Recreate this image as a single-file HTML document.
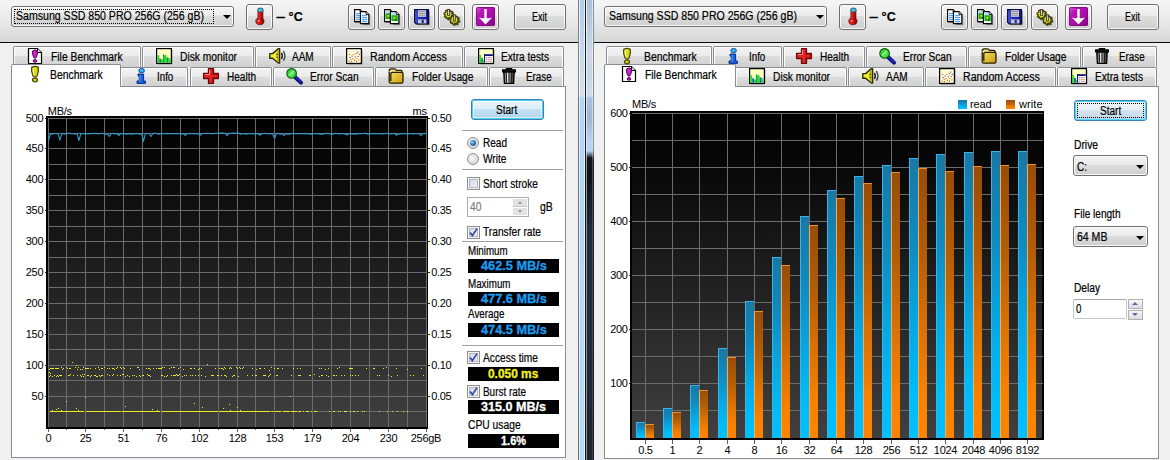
<!DOCTYPE html>
<html lang="en"><head><meta charset="utf-8"><title>HD Tune Pro</title>
<style>
*{box-sizing:border-box;margin:0;padding:0}
html,body{width:1170px;height:460px;overflow:hidden;background:#f0f0f0}
body{position:relative;font-family:"Liberation Sans",sans-serif;font-size:11px;color:#000;letter-spacing:-0.3px;-webkit-text-stroke:0.2px #000}
.abs,.t,.win,.btn,.tab,.combo,.blk,.sep,.chk,.rad,.lbl{position:absolute}
.win{top:0;height:460px;width:578px;background:#f0f0f0;overflow:hidden}
.tb{position:absolute;left:0;top:0;width:100%;height:42px;background:linear-gradient(#f5f5f5 0%,#e9e9e9 50%,#d6d6d6 100%)}
.tbl{position:absolute;left:0;top:42px;width:100%;height:1px;background:#0a0a0a}
.tbl2{position:absolute;left:0;top:42px;width:100%;height:1px;background:#8a8a8a}
.btn{border:1px solid #707070;border-radius:3px;background:linear-gradient(#f4f4f4 0%,#ebebeb 44%,#dddddd 47%,#cfcfcf 100%);box-shadow:inset 0 0 0 1px rgba(255,255,255,.85)}
.btn.def{border-color:#3c7fb1;background:linear-gradient(#eef6fb 0%,#dcedf8 48%,#c4e0f3 50%,#b0d4ec 100%);box-shadow:inset 0 0 0 1px #49d4f4, inset 0 0 0 2px rgba(255,255,255,.55)}
.btn.foc{border-color:#3c7fb1;background:linear-gradient(#f2f7fa 0%,#e6eff6 48%,#d4e3ef 50%,#c6d9e8 100%);box-shadow:inset 0 0 0 1px #48d8fb}
.t{white-space:pre;line-height:13px;height:13px}
.combo{border:1px solid #707070;border-radius:3px;background:linear-gradient(#f4f4f4 0%,#ebebeb 44%,#dddddd 47%,#cfcfcf 100%);box-shadow:inset 0 0 0 1px rgba(255,255,255,.85)}
.arr{position:absolute;width:0;height:0;border-left:4px solid transparent;border-right:4px solid transparent;border-top:4px solid #000}
.tab{border:1px solid #898c95;border-bottom:none;border-radius:2px 2px 0 0;background:linear-gradient(#f3f3f3 0%,#ebebeb 44%,#dddddd 47%,#d0d0d0 100%);box-shadow:inset 1px 1px 0 rgba(255,255,255,.9), inset -1px 0 0 rgba(255,255,255,.9)}
.tab.sel{background:#fff;box-shadow:none;z-index:3}
.panel{position:absolute;border:1px solid #898c95;background:#fff;z-index:2}
.blk{background:#000;height:14px;left:468px;width:91px;text-align:center;font-weight:bold;font-size:12px;line-height:14px;letter-spacing:0}
.sep{height:1px;background:#a0a0a0;left:462px;width:101px}
.chk{width:13px;height:13px;border:1px solid #8e8f8f;background:linear-gradient(135deg,#cdd3e4,#f6f7fb);box-shadow:inset 0 0 0 1px #f4f4f4, inset 0 0 0 2px #b4b8c4}
.rad{width:12px;height:12px;border:1px solid #8e8f8f;border-radius:50%;background:radial-gradient(circle at 40% 40%,#f6f6f6,#d0d0d0)}
svg{position:absolute;overflow:visible}
</style></head>
<body>
<div class="win" style="left:0">
<div class="tb"></div><div class="tbl"></div><div class="combo" style="left:11px;top:6px;width:223px;height:21px"></div><div class="abs" style="left:14px;top:9px;width:200px;height:15px;border:1px dotted #000"></div><div class="t" style="left:15.5px;top:10px;font-size:12px;letter-spacing:0;transform:scaleX(0.8808);transform-origin:0 0;">Samsung SSD 850 PRO 256G (256 gB)</div><div class="arr" style="left:223px;top:15px"></div><div class="btn" style="left:246px;top:4px;width:27px;height:26px"></div><svg style="left:254.6px;top:8px" width="10" height="17" viewBox="0 0 10 17"><defs><linearGradient id="rg" x1="0" y1="0" x2="1" y2="0"><stop offset="0" stop-color="#e83030"/><stop offset=".45" stop-color="#dc1616"/><stop offset="1" stop-color="#7c0606"/></linearGradient></defs><ellipse cx="4.9" cy="13.2" rx="4.1" ry="3.5" fill="url(#rg)" stroke="#5e0505" stroke-width=".7"/><path d="M2.9 1.4 Q2.9 0.3 4 0.3 H6.8 Q7.9 0.3 7.9 1.4 V11 H2.9Z" fill="url(#rg)" stroke="#5e0505" stroke-width=".7"/><path d="M2.9 1.4 Q2.9 0.3 4 0.3 H6.8 Q7.9 0.3 7.9 1.4 V3.8 H2.9Z" fill="#46c4d6" stroke="#1a6a78" stroke-width=".7"/><path d="M3.3 9.4 H7.5 V11.4 H3.3Z" fill="url(#rg)"/><path d="M3.4 12 L4.6 12.2 L4.4 13.4 L3.2 13.2Z" fill="#fff"/></svg><div class="t" style="left:276px;top:11.4px;font-weight:bold;letter-spacing:0;font-size:12px;transform:scaleX(1.4);transform-origin:0 0">–</div><div class="t" style="left:288.6px;top:11.2px;font-weight:bold;letter-spacing:0.2px;font-size:12.5px">°C</div><div class="btn" style="left:348px;top:4px;width:27px;height:26px"></div><div class="btn" style="left:378px;top:4px;width:27px;height:26px"></div><div class="btn" style="left:408px;top:4px;width:27px;height:26px"></div><div class="btn" style="left:438px;top:4px;width:27px;height:26px"></div><svg style="left:354px;top:9px" width="16" height="16" viewBox="0 0 16 16"><path d="M1.6 13.4 H9.6 V15.6 H15.6 V5" stroke="#333" stroke-width="1" fill="none" opacity=".55"/><path d="M0.6 0.6 H6.199999999999999 L9.0 3.4 V12.6 H0.6Z" fill="#fff" stroke="#000" stroke-width="1.1"/><path d="M6.199999999999999 0.6 V3.4 H9.0" fill="#e8e8e8" stroke="#000" stroke-width=".9"/><rect x="2.0" y="4.2" width="5.4" height="1" fill="#2a8ee8"/><rect x="2.0" y="6.2" width="5.4" height="1" fill="#2a8ee8"/><rect x="2.0" y="8.2" width="5.4" height="1" fill="#2a8ee8"/><rect x="2.0" y="10.2" width="5.4" height="1" fill="#2a8ee8"/><path d="M6.4 2.6 H12.0 L14.8 5.4 V14.6 H6.4Z" fill="#fff" stroke="#000" stroke-width="1.1"/><path d="M12.0 2.6 V5.4 H14.8" fill="#e8e8e8" stroke="#000" stroke-width=".9"/><rect x="7.800000000000001" y="6.2" width="5.4" height="1" fill="#2a8ee8"/><rect x="7.800000000000001" y="8.2" width="5.4" height="1" fill="#2a8ee8"/><rect x="7.800000000000001" y="10.2" width="5.4" height="1" fill="#2a8ee8"/><rect x="7.800000000000001" y="12.2" width="5.4" height="1" fill="#2a8ee8"/></svg><svg style="left:384px;top:9px" width="16" height="16" viewBox="0 0 16 16"><path d="M1.6 13.4 H9.6 V15.6 H15.6 V5" stroke="#333" stroke-width="1" fill="none" opacity=".55"/><path d="M0.6 0.6 H6.199999999999999 L9.0 3.4 V12.6 H0.6Z" fill="#fff" stroke="#000" stroke-width="1.1"/><path d="M6.199999999999999 0.6 V3.4 H9.0" fill="#e8e8e8" stroke="#000" stroke-width=".9"/><rect x="1.6" y="2.0" width="4.4" height="2.2" fill="#a8e0ff"/><rect x="1.6" y="4.2" width="6.4" height="6" fill="#22b022"/><rect x="3.6" y="6.0" width="1.8" height="1.8" fill="#c8e820"/><rect x="5.199999999999999" y="8.0" width="1.4" height="1.4" fill="#084008"/><path d="M6.4 2.6 H12.0 L14.8 5.4 V14.6 H6.4Z" fill="#fff" stroke="#000" stroke-width="1.1"/><path d="M12.0 2.6 V5.4 H14.8" fill="#e8e8e8" stroke="#000" stroke-width=".9"/><rect x="7.4" y="4.0" width="4.4" height="2.2" fill="#a8e0ff"/><rect x="7.4" y="6.2" width="6.4" height="6" fill="#22b022"/><rect x="9.4" y="8.0" width="1.8" height="1.8" fill="#c8e820"/><rect x="11.0" y="10.0" width="1.4" height="1.4" fill="#084008"/></svg><svg style="left:414px;top:8.6px" width="16" height="16" viewBox="0 0 16 16"><defs><linearGradient id="bg1" x1="0" y1="0" x2="1" y2="0"><stop offset="0" stop-color="#5a68d8"/><stop offset=".3" stop-color="#2030c8"/><stop offset="1" stop-color="#0c1890"/></linearGradient></defs><path d="M0.6 0.6 H14.4 V14.8 H2.2 L0.6 13.2Z" fill="url(#bg1)" stroke="#060a3c" stroke-width="1.2"/><path d="M15.2 1.6 V15.6 H3" stroke="#222" stroke-width="1" fill="none" opacity=".6"/><rect x="4" y="1.2" width="8" height="6.6" fill="#d8d8d8"/><path d="M4.4 2.6 H11.6 M4.4 4.4 H11.6 M4.4 6.2 H11.6" stroke="#8a8a8a" stroke-width=".9"/><rect x="4" y="10.4" width="8.4" height="4" fill="#c8c8c8"/><rect x="7.6" y="10.8" width="2.2" height="3.2" fill="#1a2aa8"/></svg><svg style="left:442.6px;top:7.6px" width="18" height="18" viewBox="0 0 18 18"><path d="M10.09 6.62 L9.85 7.79 L8.55 7.82 L8.05 8.55 L8.52 9.77 L7.52 10.43 L6.58 9.53 L5.71 9.70 L5.18 10.89 L4.01 10.65 L3.98 9.35 L3.25 8.85 L2.03 9.32 L1.37 8.32 L2.27 7.38 L2.10 6.51 L0.91 5.98 L1.15 4.81 L2.45 4.78 L2.95 4.05 L2.48 2.83 L3.48 2.17 L4.42 3.07 L5.29 2.90 L5.82 1.71 L6.99 1.95 L7.02 3.25 L7.75 3.75 L8.97 3.28 L9.63 4.28 L8.73 5.22 L8.90 6.09Z" transform="translate(.9 .9)" fill="#2a2a04" stroke="#2a2a04" stroke-width="1.2" stroke-linejoin="round" opacity=".75"/><path d="M10.09 6.62 L9.85 7.79 L8.55 7.82 L8.05 8.55 L8.52 9.77 L7.52 10.43 L6.58 9.53 L5.71 9.70 L5.18 10.89 L4.01 10.65 L3.98 9.35 L3.25 8.85 L2.03 9.32 L1.37 8.32 L2.27 7.38 L2.10 6.51 L0.91 5.98 L1.15 4.81 L2.45 4.78 L2.95 4.05 L2.48 2.83 L3.48 2.17 L4.42 3.07 L5.29 2.90 L5.82 1.71 L6.99 1.95 L7.02 3.25 L7.75 3.75 L8.97 3.28 L9.63 4.28 L8.73 5.22 L8.90 6.09Z" fill="#e4e41e" stroke="#3a3a04" stroke-width="1.1" stroke-linejoin="round"/><circle cx="5.5" cy="6.3" r="1.66" fill="#8a8a10"/><rect x="4.6" y="1.3999999999999995" width="1.9" height="6.2" fill="#d8d8d8" stroke="#333" stroke-width=".8"/><path d="M15.99 12.13 L15.75 13.32 L14.41 13.35 L13.91 14.10 L14.38 15.35 L13.37 16.02 L12.40 15.10 L11.52 15.27 L10.97 16.49 L9.78 16.25 L9.75 14.91 L9.00 14.41 L7.75 14.88 L7.08 13.87 L8.00 12.90 L7.83 12.02 L6.61 11.47 L6.85 10.28 L8.19 10.25 L8.69 9.50 L8.22 8.25 L9.23 7.58 L10.20 8.50 L11.08 8.33 L11.63 7.11 L12.82 7.35 L12.85 8.69 L13.60 9.19 L14.85 8.72 L15.52 9.73 L14.60 10.70 L14.77 11.58Z" transform="translate(.9 .9)" fill="#2a2a04" stroke="#2a2a04" stroke-width="1.2" stroke-linejoin="round" opacity=".75"/><path d="M15.99 12.13 L15.75 13.32 L14.41 13.35 L13.91 14.10 L14.38 15.35 L13.37 16.02 L12.40 15.10 L11.52 15.27 L10.97 16.49 L9.78 16.25 L9.75 14.91 L9.00 14.41 L7.75 14.88 L7.08 13.87 L8.00 12.90 L7.83 12.02 L6.61 11.47 L6.85 10.28 L8.19 10.25 L8.69 9.50 L8.22 8.25 L9.23 7.58 L10.20 8.50 L11.08 8.33 L11.63 7.11 L12.82 7.35 L12.85 8.69 L13.60 9.19 L14.85 8.72 L15.52 9.73 L14.60 10.70 L14.77 11.58Z" fill="#e4e41e" stroke="#3a3a04" stroke-width="1.1" stroke-linejoin="round"/><circle cx="11.3" cy="11.8" r="1.69" fill="#8a8a10"/><rect x="10.4" y="6.9" width="1.9" height="6.2" fill="#d8d8d8" stroke="#333" stroke-width=".8"/></svg><div class="btn" style="left:472px;top:4px;width:27px;height:26px"></div><svg style="left:476px;top:7.4px" width="19" height="19" viewBox="0 0 19 19"><defs><linearGradient id="pg" x1="0" y1="0" x2="1" y2="1"><stop offset="0" stop-color="#d860d8"/><stop offset=".25" stop-color="#b818b8"/><stop offset=".6" stop-color="#a80ca8"/><stop offset="1" stop-color="#820682"/></linearGradient></defs><rect x="0" y="0" width="19" height="19" rx="1.8" fill="url(#pg)"/><rect x="0.5" y="0.5" width="18" height="18" rx="1.6" fill="none" stroke="#7a0a7a" stroke-width="1" opacity=".8"/><path d="M9.5 2 V12.5" stroke="#fff" stroke-width="2.4"/><path d="M2.9 10.6 L6.2 11.3 H12.8 L16.1 10.6 L9.5 17.6Z" fill="#fff"/></svg><div class="btn" style="left:514px;top:4px;width:52px;height:26px"></div><div class="t" style="left:532px;top:11px;font-size:12px;letter-spacing:0;transform:scaleX(0.7498);transform-origin:0 0;">Exit</div><div class="tab" style="left:13px;top:46px;width:128px;height:21px"></div><svg style="z-index:4;left:27.2px;top:48px" width="16" height="16" viewBox="0 0 16 16"><path d="M1.5 0.5 H10.5 L14.5 4.5 V15.5 H1.5Z" fill="#fff" stroke="#000" stroke-width="1.2"/><path d="M10.5 0.5 V4.5 H14.5" fill="#ddd" stroke="#000" stroke-width="1"/><path d="M5.6 3 Q8 0.8 10.4 3 Q11 5.6 9.4 9.2 Q8.9 10.2 8 10.2 Q7.1 10.2 6.6 9.2 Q5 5.6 5.6 3Z" fill="#d420d4" stroke="#4a004a" stroke-width="1"/><ellipse cx="8" cy="12.9" rx="1.8" ry="1.3" fill="#d420d4" stroke="#4a004a" stroke-width="1"/></svg><div class="t" style="left:51.2px;top:51px;font-size:12px;letter-spacing:0;transform:scaleX(0.8602);transform-origin:0 0;z-index:4;">File Benchmark</div><div class="tab" style="left:142px;top:46px;width:112px;height:21px"></div><svg style="z-index:4;left:156px;top:48px" width="16" height="16" viewBox="0 0 16 16"><rect x="0.6" y="0.6" width="14.8" height="14.8" fill="#ffffc0" stroke="#000" stroke-width="1.2"/><path d="M15.7 1.6 V15.7 H1.6" stroke="#000" stroke-width="1" fill="none" opacity=".8"/><rect x="1.2" y="7.2" width="2.0" height="7.6" fill="#22e022"/><rect x="3.2" y="10.4" width="1.8" height="4.4" fill="#1f8a5e"/><rect x="5.0" y="11.4" width="2.0" height="3.4" fill="#22e022"/><rect x="7.0" y="6.2" width="0.9" height="8.6" fill="#178052"/><rect x="7.9" y="7.2" width="2.7" height="7.6" fill="#22e022"/><rect x="10.6" y="9.4" width="2.0" height="5.4" fill="#1f8a5e"/><rect x="12.6" y="10.4" width="2.2" height="4.4" fill="#22e022"/></svg><div class="t" style="left:179.7px;top:51px;font-size:12px;letter-spacing:0;transform:scaleX(0.8549);transform-origin:0 0;z-index:4;">Disk monitor</div><div class="tab" style="left:255px;top:46px;width:76px;height:21px"></div><svg style="z-index:4;left:268.8px;top:48px" width="17" height="16" viewBox="0 0 17 16"><path d="M0.8 5.6 H3.6 L9.4 0.6 H10.6 V15 H9.4 L3.6 10.2 H0.8Z" fill="#f2ee2a" stroke="#2e2a04" stroke-width="1.4" stroke-linejoin="round"/><path d="M9 2 V13.6" stroke="#a8a010" stroke-width="1.4"/><circle cx="8" cy="6.4" r=".8" fill="#333"/><circle cx="8" cy="9.2" r=".8" fill="#333"/><path d="M12.4 4.8 Q14.2 7.8 12.4 10.8" stroke="#222" stroke-width="1.5" fill="none"/><path d="M14.4 3 Q17.4 7.8 14.4 12.6" stroke="#444" stroke-width="1.4" fill="none"/></svg><div class="t" style="left:292.3px;top:51px;font-size:12px;letter-spacing:0;transform:scaleX(0.8345);transform-origin:0 0;z-index:4;">AAM</div><div class="tab" style="left:332px;top:46px;width:131px;height:21px"></div><svg style="z-index:4;left:346.2px;top:48px" width="16" height="16" viewBox="0 0 16 16"><rect x="0.6" y="0.6" width="14.8" height="14.8" fill="#fffad2" stroke="#000" stroke-width="1.2"/><path d="M15.6 1.5 V15.6 H1.5" stroke="#000" stroke-width="1.2" fill="none"/><rect x="2.6" y="12.6" width="1" height="1" fill="#e02020"/><rect x="3.6" y="9" width="1" height="1" fill="#2020c0"/><rect x="4.6" y="11" width="1" height="1" fill="#e06010"/><rect x="5.6" y="7.6" width="1" height="1" fill="#2020c0"/><rect x="6.4" y="10.2" width="1" height="1" fill="#e02020"/><rect x="7.4" y="6" width="1" height="1" fill="#e06010"/><rect x="8" y="11.8" width="1" height="1" fill="#e02020"/><rect x="8.8" y="8.4" width="1" height="1" fill="#2020c0"/><rect x="9.8" y="5" width="1" height="1" fill="#e02020"/><rect x="10.4" y="10" width="1" height="1" fill="#e06010"/><rect x="11.2" y="3.6" width="1" height="1" fill="#2020c0"/><rect x="11.8" y="8" width="1" height="1" fill="#e02020"/><rect x="12.4" y="11.4" width="1" height="1" fill="#e06010"/><rect x="12.8" y="5.8" width="1" height="1" fill="#2020c0"/><rect x="5" y="13" width="1" height="1" fill="#e06010"/><rect x="10" y="12.6" width="1" height="1" fill="#e02020"/><rect x="3" y="6" width="1" height="1" fill="#e06010"/></svg><div class="t" style="left:369.5px;top:51px;font-size:12px;letter-spacing:0;transform:scaleX(0.8858);transform-origin:0 0;z-index:4;">Random Access</div><div class="tab" style="left:464px;top:46px;width:100px;height:21px"></div><svg style="z-index:4;left:478.2px;top:48px" width="16" height="16" viewBox="0 0 16 16"><rect x="0.6" y="0.6" width="14.8" height="14.8" fill="#ffffc0" stroke="#000" stroke-width="1.2"/><path d="M15.7 1.6 V15.7 H1.6" stroke="#000" stroke-width="1" fill="none" opacity=".8"/><rect x="1.2" y="7" width="1.9" height="7.8" fill="#22e022"/><rect x="3.1" y="10" width="1.8" height="4.8" fill="#1f8a5e"/><rect x="4.9" y="12" width="1" height="2.8" fill="#22e022"/><rect x="6" y="6.2" width="8.8" height="8.6" fill="#fff"/><rect x="6" y="6.2" width="8.8" height="1.8" fill="#14147a"/><rect x="6" y="6.2" width="1.1" height="8.6" fill="#14147a"/><rect x="8.3" y="9.2" width="1" height="1" fill="#c02020"/><rect x="10.4" y="9.2" width="1" height="1" fill="#202090"/><rect x="12.5" y="9.2" width="1" height="1" fill="#c02020"/><rect x="8.3" y="11.2" width="1" height="1" fill="#209020"/><rect x="10.4" y="11.2" width="1" height="1" fill="#c02020"/><rect x="12.5" y="11.2" width="1" height="1" fill="#c02020"/><rect x="8.3" y="13.2" width="1" height="1" fill="#c02020"/><rect x="10.4" y="13.2" width="1" height="1" fill="#c02020"/><rect x="12.5" y="13.2" width="1" height="1" fill="#202090"/></svg><div class="t" style="left:501.3px;top:51px;font-size:12px;letter-spacing:0;transform:scaleX(0.8468);transform-origin:0 0;z-index:4;">Extra tests</div><div class="tab" style="left:120px;top:67px;width:68px;height:20px"></div><svg style="z-index:4;left:132.5px;top:68.2px" width="16" height="16" viewBox="0 0 16 16"><ellipse cx="8.6" cy="2.6" rx="2.8" ry="2.2" fill="#38b0f0" stroke="#0a3c8c" stroke-width=".9"/><path d="M5 6 H10.6 V13 H12.4 V15.4 H4 V13 H6.2 V8 H5Z" fill="#1464e6" stroke="#06207a" stroke-width=".9"/><path d="M7 7 V14" stroke="#5aa0ff" stroke-width="1"/></svg><div class="t" style="left:156.6px;top:71px;font-size:12px;letter-spacing:0;transform:scaleX(0.8144);transform-origin:0 0;z-index:4;">Info</div><div class="tab" style="left:190px;top:67px;width:82px;height:20px"></div><svg style="z-index:4;left:203px;top:68.2px" width="16" height="16" viewBox="0 0 16 16"><path d="M5.5 0.6 H10.5 V5.5 H15.4 V10.5 H10.5 V15.4 H5.5 V10.5 H0.6 V5.5 H5.5Z" fill="#e22424" stroke="#6e0808" stroke-width="1.3" stroke-linejoin="round"/><path d="M6.5 1.8 V6.5 H1.8" stroke="#ff8a8a" stroke-width="1" fill="none"/><path d="M9.6 2 V6.4 H14.4 V9.6 H9.6 V14.4" stroke="#a81010" stroke-width="1" fill="none"/></svg><div class="t" style="left:227px;top:71px;font-size:12px;letter-spacing:0;transform:scaleX(0.8361);transform-origin:0 0;z-index:4;">Health</div><div class="tab" style="left:273px;top:67px;width:101px;height:20px"></div><svg style="z-index:4;left:285.6px;top:68.2px" width="17" height="16" viewBox="0 0 17 16"><path d="M9 9 L15 14.6" stroke="#0c0c6e" stroke-width="4" stroke-linecap="round"/><path d="M9.4 8.8 L14.8 13.8" stroke="#2828d8" stroke-width="1.6" stroke-linecap="round"/><circle cx="5.6" cy="5.4" r="4.8" fill="#3cd83c" stroke="#0a5a0a" stroke-width="1.1"/><path d="M3 7.4 L7.6 3" stroke="#b8ffb8" stroke-width="1.1"/><path d="M4.6 8.2 L8.4 4.6" stroke="#8cf08c" stroke-width=".9"/></svg><div class="t" style="left:309.6px;top:71px;font-size:12px;letter-spacing:0;transform:scaleX(0.8492);transform-origin:0 0;z-index:4;">Error Scan</div><div class="tab" style="left:375px;top:67px;width:113px;height:20px"></div><svg style="z-index:4;left:388px;top:68.2px" width="16" height="16" viewBox="0 0 16 16"><defs><linearGradient id="fg" x1="0" y1="0" x2="1" y2="1"><stop offset="0" stop-color="#fbe66a"/><stop offset="1" stop-color="#c99a0c"/></linearGradient></defs><path d="M1.2 3 Q1.2 0.8 3.2 0.8 H6.4 Q7.8 0.8 8.4 2.4 H12.6 Q14.2 2.4 14.2 4 V5" fill="#f6e27a" stroke="#2a1e02" stroke-width="1.3"/><path d="M1.2 3.4 V13.6 Q1.2 15.2 2.8 15.2 H13.4 Q15 15.2 15 13.6 V5.6 Q15 4.4 13.6 4.4 H4 Q2.8 4.4 2.8 5.6 V13" fill="url(#fg)" stroke="#2a1e02" stroke-width="1.3"/></svg><div class="t" style="left:411.7px;top:71px;font-size:12px;letter-spacing:0;transform:scaleX(0.8538);transform-origin:0 0;z-index:4;">Folder Usage</div><div class="tab" style="left:489px;top:67px;width:75px;height:20px"></div><svg style="z-index:4;left:502.3px;top:68.2px" width="14" height="16" viewBox="0 0 14 16"><defs><linearGradient id="tg" x1="0" y1="0" x2="1" y2="0"><stop offset="0" stop-color="#3a3a3a"/><stop offset=".35" stop-color="#e8e8e8"/><stop offset=".6" stop-color="#8a8a8a"/><stop offset="1" stop-color="#1e1e1e"/></linearGradient></defs><path d="M4.4 1.8 V0.7 H9.6 V1.8" fill="#222" stroke="#000" stroke-width="1.3"/><path d="M0.6 1.8 H13.4 V4 H0.6Z" fill="#1a1a1a" stroke="#000" stroke-width="1.1"/><path d="M1.8 4.2 H12.2 L11.6 15.3 H2.4Z" fill="url(#tg)" stroke="#000" stroke-width="1.3"/><path d="M4.3 5 L4.6 14.6 M7 5 V14.6 M9.7 5 L9.4 14.6" stroke="#1a1a1a" stroke-width="1"/></svg><div class="t" style="left:525.6px;top:71px;font-size:12px;letter-spacing:0;transform:scaleX(0.8199);transform-origin:0 0;z-index:4;">Erase</div><div class="tab sel" style="left:11px;top:64px;width:110px;height:23px"></div><svg style="z-index:4;left:27px;top:66px" width="16" height="16" viewBox="0 0 16 16"><path d="M4.7 1.4 Q8 -0.6 11.3 1.4 Q12 4.4 10.2 9.6 Q9.7 11 8 11 Q6.3 11 5.8 9.6 Q4 4.4 4.7 1.4Z" fill="#dada1c" stroke="#4a4a08" stroke-width="1.3"/><ellipse cx="8" cy="14" rx="2.5" ry="1.8" fill="#dada1c" stroke="#4a4a08" stroke-width="1.3"/><path d="M6.4 2.2 Q6 5 6.9 8.6" stroke="#ffffa0" stroke-width="1.1" fill="none"/></svg><div class="t" style="left:50.2px;top:69px;font-size:12px;letter-spacing:0;transform:scaleX(0.8700);transform-origin:0 0;z-index:4;">Benchmark</div><div class="panel" style="left:11px;top:86px;width:555px;height:372px"></div><div class="abs" style="left:12px;top:86px;width:108px;height:1px;background:#fff;z-index:5"></div><div style="position:absolute;left:0;top:0;z-index:6"><svg style="left:0;top:0" width="578" height="460" viewBox="0 0 578 460" shape-rendering="crispEdges"><defs><linearGradient id="lgbg" x1="0" y1="0" x2="0" y2="1"><stop offset="0" stop-color="#000"/><stop offset=".2" stop-color="#0a0a0a"/><stop offset="1" stop-color="#404040"/></linearGradient></defs><rect x="46" y="116" width="382" height="313" fill="#000"/><rect x="48" y="118" width="379" height="309" fill="url(#lgbg)"/><path d="M48.5 118 V427" stroke="#6c6c6c" stroke-width="1"/><path d="M66.5 118 V427" stroke="#6c6c6c" stroke-width="1"/><path d="M85.5 118 V427" stroke="#6c6c6c" stroke-width="1"/><path d="M104.5 118 V427" stroke="#6c6c6c" stroke-width="1"/><path d="M123.5 118 V427" stroke="#6c6c6c" stroke-width="1"/><path d="M142.5 118 V427" stroke="#6c6c6c" stroke-width="1"/><path d="M161.5 118 V427" stroke="#6c6c6c" stroke-width="1"/><path d="M180.5 118 V427" stroke="#6c6c6c" stroke-width="1"/><path d="M199.5 118 V427" stroke="#6c6c6c" stroke-width="1"/><path d="M218.5 118 V427" stroke="#6c6c6c" stroke-width="1"/><path d="M237.5 118 V427" stroke="#6c6c6c" stroke-width="1"/><path d="M255.5 118 V427" stroke="#6c6c6c" stroke-width="1"/><path d="M274.5 118 V427" stroke="#6c6c6c" stroke-width="1"/><path d="M293.5 118 V427" stroke="#6c6c6c" stroke-width="1"/><path d="M312.5 118 V427" stroke="#6c6c6c" stroke-width="1"/><path d="M331.5 118 V427" stroke="#6c6c6c" stroke-width="1"/><path d="M350.5 118 V427" stroke="#6c6c6c" stroke-width="1"/><path d="M369.5 118 V427" stroke="#6c6c6c" stroke-width="1"/><path d="M388.5 118 V427" stroke="#6c6c6c" stroke-width="1"/><path d="M407.5 118 V427" stroke="#6c6c6c" stroke-width="1"/><path d="M426.5 118 V427" stroke="#6c6c6c" stroke-width="1"/><path d="M48 118.5 H427" stroke="#6c6c6c" stroke-width="1"/><path d="M48 133.5 H427" stroke="#6c6c6c" stroke-width="1"/><path d="M48 148.5 H427" stroke="#6c6c6c" stroke-width="1"/><path d="M48 164.5 H427" stroke="#6c6c6c" stroke-width="1"/><path d="M48 179.5 H427" stroke="#6c6c6c" stroke-width="1"/><path d="M48 195.5 H427" stroke="#6c6c6c" stroke-width="1"/><path d="M48 210.5 H427" stroke="#6c6c6c" stroke-width="1"/><path d="M48 226.5 H427" stroke="#6c6c6c" stroke-width="1"/><path d="M48 241.5 H427" stroke="#6c6c6c" stroke-width="1"/><path d="M48 257.5 H427" stroke="#6c6c6c" stroke-width="1"/><path d="M48 272.5 H427" stroke="#6c6c6c" stroke-width="1"/><path d="M48 287.5 H427" stroke="#6c6c6c" stroke-width="1"/><path d="M48 303.5 H427" stroke="#6c6c6c" stroke-width="1"/><path d="M48 318.5 H427" stroke="#6c6c6c" stroke-width="1"/><path d="M48 334.5 H427" stroke="#6c6c6c" stroke-width="1"/><path d="M48 349.5 H427" stroke="#6c6c6c" stroke-width="1"/><path d="M48 365.5 H427" stroke="#6c6c6c" stroke-width="1"/><path d="M48 380.5 H427" stroke="#6c6c6c" stroke-width="1"/><path d="M48 396.5 H427" stroke="#6c6c6c" stroke-width="1"/><path d="M48 411.5 H427" stroke="#6c6c6c" stroke-width="1"/><path d="M44.6 118.5 H46 M428 118.5 H429.6" stroke="#222" stroke-width="1"/><path d="M44.6 148.5 H46 M428 148.5 H429.6" stroke="#222" stroke-width="1"/><path d="M44.6 179.5 H46 M428 179.5 H429.6" stroke="#222" stroke-width="1"/><path d="M44.6 210.5 H46 M428 210.5 H429.6" stroke="#222" stroke-width="1"/><path d="M44.6 241.5 H46 M428 241.5 H429.6" stroke="#222" stroke-width="1"/><path d="M44.6 272.5 H46 M428 272.5 H429.6" stroke="#222" stroke-width="1"/><path d="M44.6 303.5 H46 M428 303.5 H429.6" stroke="#222" stroke-width="1"/><path d="M44.6 334.5 H46 M428 334.5 H429.6" stroke="#222" stroke-width="1"/><path d="M44.6 365.5 H46 M428 365.5 H429.6" stroke="#222" stroke-width="1"/><path d="M44.6 396.5 H46 M428 396.5 H429.6" stroke="#222" stroke-width="1"/><path d="M48.5 429 V432" stroke="#606060" stroke-width="1"/><path d="M66.5 429 V430" stroke="#606060" stroke-width="1"/><path d="M85.5 429 V432" stroke="#606060" stroke-width="1"/><path d="M104.5 429 V430" stroke="#606060" stroke-width="1"/><path d="M123.5 429 V432" stroke="#606060" stroke-width="1"/><path d="M142.5 429 V430" stroke="#606060" stroke-width="1"/><path d="M161.5 429 V432" stroke="#606060" stroke-width="1"/><path d="M180.5 429 V430" stroke="#606060" stroke-width="1"/><path d="M199.5 429 V432" stroke="#606060" stroke-width="1"/><path d="M218.5 429 V430" stroke="#606060" stroke-width="1"/><path d="M237.5 429 V432" stroke="#606060" stroke-width="1"/><path d="M255.5 429 V430" stroke="#606060" stroke-width="1"/><path d="M274.5 429 V432" stroke="#606060" stroke-width="1"/><path d="M293.5 429 V430" stroke="#606060" stroke-width="1"/><path d="M312.5 429 V432" stroke="#606060" stroke-width="1"/><path d="M331.5 429 V430" stroke="#606060" stroke-width="1"/><path d="M350.5 429 V432" stroke="#606060" stroke-width="1"/><path d="M369.5 429 V430" stroke="#606060" stroke-width="1"/><path d="M388.5 429 V432" stroke="#606060" stroke-width="1"/><path d="M407.5 429 V430" stroke="#606060" stroke-width="1"/><path d="M426.5 429 V432" stroke="#606060" stroke-width="1"/></svg><svg style="left:0;top:0" width="578" height="460" viewBox="0 0 578 460"><path d="M48.5 140.8 L50.4 133.7 L52.3 134.2 L54.2 133.2 L56.1 133.7 L58.0 133.7 L59.9 140.2 L61.8 133.4 L63.7 134.0 L65.6 134.0 L67.5 133.2 L69.4 133.2 L71.3 133.7 L73.2 133.7 L75.1 134.0 L77.0 133.7 L78.9 140.5 L80.8 133.7 L82.7 133.7 L84.6 133.7 L86.5 133.7 L88.4 133.4 L90.3 133.7 L92.2 133.4 L94.1 133.2 L96.0 133.7 L97.9 133.7 L99.8 133.7 L101.7 133.2 L103.6 133.7 L105.5 134.2 L107.4 133.7 L109.3 136.4 L111.2 133.7 L113.1 133.2 L115.0 134.0 L116.9 133.4 L118.8 135.6 L120.7 133.4 L122.6 133.7 L124.5 133.7 L126.4 134.2 L128.3 133.7 L130.2 134.0 L132.1 134.2 L134.0 133.7 L135.9 133.4 L137.8 133.7 L139.7 134.2 L141.6 133.7 L143.5 141.4 L145.4 133.4 L147.3 133.4 L149.2 133.7 L151.1 136.5 L153.0 133.2 L154.9 133.2 L156.8 133.7 L158.7 134.2 L160.6 133.7 L162.5 133.7 L164.4 133.7 L166.3 133.7 L168.2 133.4 L170.1 133.7 L172.0 133.7 L173.9 133.7 L175.8 133.7 L177.7 133.7 L179.6 133.7 L181.5 134.2 L183.4 133.4 L185.3 135.5 L187.2 133.7 L189.1 133.4 L191.0 133.7 L192.9 133.7 L194.8 133.7 L196.7 133.7 L198.6 134.0 L200.5 135.2 L202.4 133.4 L204.3 133.4 L206.2 133.2 L208.1 133.2 L210.0 133.7 L211.9 133.7 L213.8 133.7 L215.7 133.2 L217.6 133.2 L219.5 133.2 L221.4 132.7 L223.3 133.2 L225.2 133.2 L227.1 135.6 L229.0 133.2 L230.9 133.5 L232.8 132.9 L234.7 133.2 L236.6 132.9 L238.5 132.9 L240.4 134.2 L242.3 133.7 L244.2 133.7 L246.1 134.2 L248.0 133.7 L249.9 133.7 L251.8 133.7 L253.7 133.7 L255.6 134.2 L257.5 133.2 L259.4 135.2 L261.3 134.2 L263.2 133.4 L265.1 133.2 L267.0 133.7 L268.9 133.7 L270.8 133.7 L272.7 134.2 L274.6 138.2 L276.5 133.2 L278.4 133.4 L280.3 134.2 L282.2 133.7 L284.1 135.6 L286.0 133.7 L287.9 134.2 L289.8 134.2 L291.7 133.4 L293.6 133.4 L295.5 133.7 L297.4 133.7 L299.3 133.7 L301.2 133.7 L303.1 133.4 L305.0 134.0 L306.9 133.4 L308.8 134.0 L310.7 134.2 L312.6 133.7 L314.5 133.7 L316.4 133.7 L318.3 133.7 L320.2 134.2 L322.1 134.2 L324.0 134.0 L325.9 133.2 L327.8 133.7 L329.7 133.7 L331.6 134.2 L333.5 134.0 L335.4 133.2 L337.3 133.4 L339.2 134.0 L341.1 133.7 L343.0 133.7 L344.9 134.0 L346.8 135.0 L348.7 133.7 L350.6 133.4 L352.5 134.2 L354.4 133.7 L356.3 134.2 L358.2 133.7 L360.1 133.7 L362.0 133.4 L363.9 133.4 L365.8 133.2 L367.7 134.2 L369.6 133.7 L371.5 133.4 L373.4 133.7 L375.3 133.7 L377.2 133.7 L379.1 133.7 L381.0 133.7 L382.9 134.0 L384.8 133.7 L386.7 133.2 L388.6 133.7 L390.5 134.0 L392.4 133.7 L394.3 133.2 L396.2 135.2 L398.1 134.2 L400.0 134.0 L401.9 133.7 L403.8 133.4 L405.7 133.7 L407.6 134.0 L409.5 133.7 L411.4 133.7 L413.3 134.0 L415.2 133.7 L417.1 133.7 L419.0 133.7 L420.9 135.6 L422.8 133.7 L424.7 133.7 L426.6 133.4" fill="none" stroke="#2c9fd8" stroke-width="1.05" stroke-linejoin="round"/><g fill="#ecec20" shape-rendering="crispEdges"><rect x="50" y="411" width="34" height="1"/><rect x="86" y="411" width="35" height="1"/><rect x="122" y="411" width="38" height="1"/><rect x="162" y="411" width="18" height="1"/><rect x="180" y="411" width="38" height="1"/><rect x="219" y="411" width="17" height="1"/><rect x="236" y="411" width="34" height="1"/><rect x="271" y="411" width="3" height="1"/><rect x="275" y="411" width="6" height="1"/><rect x="283" y="411" width="7" height="1"/><rect x="291" y="411" width="6" height="1"/><rect x="298" y="411" width="2" height="1"/><rect x="300" y="411" width="1" height="1"/><rect x="303" y="411" width="1" height="1"/><rect x="306" y="411" width="3" height="1"/><rect x="311" y="411" width="1" height="1"/><rect x="314" y="411" width="3" height="1"/><rect x="329" y="411" width="1" height="1"/><rect x="333" y="411" width="2" height="1"/><rect x="338" y="411" width="1" height="1"/><rect x="340" y="411" width="1" height="1"/><rect x="344" y="411" width="3" height="1"/><rect x="350" y="411" width="1" height="1"/><rect x="353" y="411" width="2" height="1"/><rect x="357" y="411" width="1" height="1"/><rect x="362" y="411" width="1" height="1"/><rect x="364" y="411" width="1" height="1"/><rect x="379" y="411" width="1" height="1"/><rect x="387" y="411" width="1" height="1"/><rect x="392" y="411" width="1" height="1"/><rect x="397" y="411" width="1" height="1"/><rect x="403" y="411" width="1" height="1"/><rect x="407" y="411" width="1" height="1"/><rect x="52" y="410" width="1" height="1"/><rect x="56" y="409" width="1" height="1"/><rect x="58" y="408" width="1" height="1"/><rect x="61" y="410" width="1" height="1"/><rect x="65.5" y="401" width="1" height="1"/><rect x="75.5" y="408" width="1" height="1"/><rect x="78" y="410" width="1" height="1"/><rect x="85" y="397" width="1" height="1"/><rect x="124.5" y="406" width="1" height="1"/><rect x="152" y="409" width="1" height="1"/><rect x="156.5" y="410" width="1" height="1"/><rect x="193.5" y="403" width="1" height="1"/><rect x="201.5" y="407" width="1" height="1"/><rect x="222.5" y="408" width="1" height="1"/><rect x="228.5" y="404" width="1" height="1"/><rect x="236.5" y="407" width="1" height="1"/><rect x="230" y="410" width="1" height="1"/><rect x="240" y="410" width="1" height="1"/><rect x="289.5" y="396" width="1" height="1"/><rect x="49" y="369" width="1" height="1"/><rect x="49" y="376" width="1" height="1"/><rect x="50" y="368" width="1" height="1"/><rect x="50" y="375" width="1" height="1"/><rect x="51" y="368" width="1" height="1"/><rect x="52" y="368" width="1" height="1"/><rect x="52" y="376" width="1" height="1"/><rect x="53" y="368" width="1" height="1"/><rect x="54" y="375" width="1" height="1"/><rect x="55" y="368" width="1" height="1"/><rect x="56" y="368" width="1" height="1"/><rect x="56" y="376" width="1" height="1"/><rect x="57" y="368" width="1" height="1"/><rect x="57" y="375" width="1" height="1"/><rect x="58" y="368" width="1" height="1"/><rect x="58" y="376" width="1" height="1"/><rect x="59" y="375" width="1" height="1"/><rect x="60" y="375" width="1" height="1"/><rect x="61" y="367" width="1" height="1"/><rect x="61" y="375" width="1" height="1"/><rect x="62" y="369" width="1" height="1"/><rect x="63" y="368" width="1" height="1"/><rect x="66" y="367" width="1" height="1"/><rect x="67" y="368" width="1" height="1"/><rect x="68" y="375" width="1" height="1"/><rect x="69" y="368" width="1" height="1"/><rect x="69" y="375" width="1" height="1"/><rect x="70" y="368" width="1" height="1"/><rect x="70" y="374" width="1" height="1"/><rect x="73" y="375" width="1" height="1"/><rect x="75" y="367" width="1" height="1"/><rect x="77" y="369" width="1" height="1"/><rect x="77" y="375" width="1" height="1"/><rect x="78" y="367" width="1" height="1"/><rect x="80" y="369" width="1" height="1"/><rect x="80" y="375" width="1" height="1"/><rect x="81" y="376" width="1" height="1"/><rect x="82" y="369" width="1" height="1"/><rect x="82" y="374" width="1" height="1"/><rect x="83" y="367" width="1" height="1"/><rect x="83" y="376" width="1" height="1"/><rect x="84" y="374" width="1" height="1"/><rect x="85" y="368" width="1" height="1"/><rect x="86" y="368" width="1" height="1"/><rect x="87" y="368" width="1" height="1"/><rect x="87" y="375" width="1" height="1"/><rect x="88" y="368" width="1" height="1"/><rect x="88" y="375" width="1" height="1"/><rect x="90" y="368" width="1" height="1"/><rect x="90" y="376" width="1" height="1"/><rect x="91" y="375" width="1" height="1"/><rect x="94" y="375" width="1" height="1"/><rect x="95" y="368" width="1" height="1"/><rect x="95" y="375" width="1" height="1"/><rect x="96" y="376" width="1" height="1"/><rect x="97" y="376" width="1" height="1"/><rect x="98" y="367" width="1" height="1"/><rect x="99" y="369" width="1" height="1"/><rect x="99" y="375" width="1" height="1"/><rect x="100" y="376" width="1" height="1"/><rect x="101" y="368" width="1" height="1"/><rect x="101" y="375" width="1" height="1"/><rect x="102" y="368" width="1" height="1"/><rect x="102" y="375" width="1" height="1"/><rect x="104" y="367" width="1" height="1"/><rect x="107" y="368" width="1" height="1"/><rect x="107" y="374" width="1" height="1"/><rect x="109" y="368" width="1" height="1"/><rect x="109" y="375" width="1" height="1"/><rect x="112" y="368" width="1" height="1"/><rect x="112" y="375" width="1" height="1"/><rect x="113" y="368" width="1" height="1"/><rect x="113" y="374" width="1" height="1"/><rect x="114" y="369" width="1" height="1"/><rect x="116" y="368" width="1" height="1"/><rect x="117" y="367" width="1" height="1"/><rect x="117" y="375" width="1" height="1"/><rect x="120" y="367" width="1" height="1"/><rect x="120" y="375" width="1" height="1"/><rect x="121" y="368" width="1" height="1"/><rect x="122" y="374" width="1" height="1"/><rect x="123" y="367" width="1" height="1"/><rect x="123" y="374" width="1" height="1"/><rect x="124" y="368" width="1" height="1"/><rect x="125" y="376" width="1" height="1"/><rect x="127" y="375" width="1" height="1"/><rect x="129" y="376" width="1" height="1"/><rect x="130" y="368" width="1" height="1"/><rect x="132" y="375" width="1" height="1"/><rect x="134" y="375" width="1" height="1"/><rect x="136" y="376" width="1" height="1"/><rect x="137" y="367" width="1" height="1"/><rect x="138" y="367" width="1" height="1"/><rect x="139" y="369" width="1" height="1"/><rect x="139" y="375" width="1" height="1"/><rect x="140" y="376" width="1" height="1"/><rect x="142" y="375" width="1" height="1"/><rect x="143" y="375" width="1" height="1"/><rect x="146" y="368" width="1" height="1"/><rect x="147" y="374" width="1" height="1"/><rect x="148" y="368" width="1" height="1"/><rect x="148" y="375" width="1" height="1"/><rect x="149" y="368" width="1" height="1"/><rect x="149" y="375" width="1" height="1"/><rect x="150" y="369" width="1" height="1"/><rect x="150" y="376" width="1" height="1"/><rect x="153" y="368" width="1" height="1"/><rect x="156" y="368" width="1" height="1"/><rect x="158" y="368" width="1" height="1"/><rect x="159" y="368" width="1" height="1"/><rect x="160" y="368" width="1" height="1"/><rect x="161" y="368" width="1" height="1"/><rect x="161" y="375" width="1" height="1"/><rect x="162" y="367" width="1" height="1"/><rect x="162" y="375" width="1" height="1"/><rect x="164" y="367" width="1" height="1"/><rect x="164" y="376" width="1" height="1"/><rect x="166" y="376" width="1" height="1"/><rect x="167" y="375" width="1" height="1"/><rect x="169" y="368" width="1" height="1"/><rect x="171" y="367" width="1" height="1"/><rect x="171" y="375" width="1" height="1"/><rect x="173" y="367" width="1" height="1"/><rect x="173" y="375" width="1" height="1"/><rect x="174" y="367" width="1" height="1"/><rect x="174" y="375" width="1" height="1"/><rect x="175" y="375" width="1" height="1"/><rect x="176" y="374" width="1" height="1"/><rect x="177" y="375" width="1" height="1"/><rect x="178" y="368" width="1" height="1"/><rect x="178" y="375" width="1" height="1"/><rect x="179" y="374" width="1" height="1"/><rect x="180" y="367" width="1" height="1"/><rect x="182" y="376" width="1" height="1"/><rect x="183" y="369" width="1" height="1"/><rect x="184" y="375" width="1" height="1"/><rect x="186" y="375" width="1" height="1"/><rect x="190" y="368" width="1" height="1"/><rect x="190" y="375" width="1" height="1"/><rect x="191" y="368" width="1" height="1"/><rect x="192" y="375" width="1" height="1"/><rect x="194" y="368" width="1" height="1"/><rect x="195" y="375" width="1" height="1"/><rect x="198" y="369" width="1" height="1"/><rect x="198" y="375" width="1" height="1"/><rect x="199" y="368" width="1" height="1"/><rect x="201" y="368" width="1" height="1"/><rect x="201" y="375" width="1" height="1"/><rect x="205" y="376" width="1" height="1"/><rect x="211" y="375" width="1" height="1"/><rect x="212" y="375" width="1" height="1"/><rect x="213" y="375" width="1" height="1"/><rect x="215" y="368" width="1" height="1"/><rect x="217" y="375" width="1" height="1"/><rect x="218" y="375" width="1" height="1"/><rect x="219" y="368" width="1" height="1"/><rect x="221" y="368" width="1" height="1"/><rect x="221" y="375" width="1" height="1"/><rect x="222" y="368" width="1" height="1"/><rect x="223" y="369" width="1" height="1"/><rect x="224" y="367" width="1" height="1"/><rect x="224" y="375" width="1" height="1"/><rect x="225" y="368" width="1" height="1"/><rect x="225" y="375" width="1" height="1"/><rect x="226" y="376" width="1" height="1"/><rect x="229" y="368" width="1" height="1"/><rect x="230" y="367" width="1" height="1"/><rect x="231" y="368" width="1" height="1"/><rect x="232" y="376" width="1" height="1"/><rect x="233" y="375" width="1" height="1"/><rect x="234" y="375" width="1" height="1"/><rect x="236" y="367" width="1" height="1"/><rect x="237" y="368" width="1" height="1"/><rect x="238" y="376" width="1" height="1"/><rect x="239" y="367" width="1" height="1"/><rect x="240" y="368" width="1" height="1"/><rect x="242" y="368" width="1" height="1"/><rect x="243" y="367" width="1" height="1"/><rect x="247" y="375" width="1" height="1"/><rect x="252" y="368" width="1" height="1"/><rect x="252" y="375" width="1" height="1"/><rect x="255" y="375" width="1" height="1"/><rect x="256" y="369" width="1" height="1"/><rect x="256" y="375" width="1" height="1"/><rect x="259" y="368" width="1" height="1"/><rect x="260" y="368" width="1" height="1"/><rect x="263" y="375" width="1" height="1"/><rect x="264" y="368" width="1" height="1"/><rect x="264" y="375" width="1" height="1"/><rect x="265" y="375" width="1" height="1"/><rect x="268" y="376" width="1" height="1"/><rect x="269" y="375" width="1" height="1"/><rect x="270" y="374" width="1" height="1"/><rect x="271" y="367" width="1" height="1"/><rect x="274" y="368" width="1" height="1"/><rect x="276" y="375" width="1" height="1"/><rect x="277" y="368" width="1" height="1"/><rect x="277" y="375" width="1" height="1"/><rect x="278" y="368" width="1" height="1"/><rect x="282" y="368" width="1" height="1"/><rect x="291" y="375" width="1" height="1"/><rect x="293" y="368" width="1" height="1"/><rect x="297" y="368" width="1" height="1"/><rect x="298" y="375" width="1" height="1"/><rect x="299" y="375" width="1" height="1"/><rect x="300" y="368" width="1" height="1"/><rect x="300" y="375" width="1" height="1"/><rect x="309" y="375" width="1" height="1"/><rect x="310" y="375" width="1" height="1"/><rect x="314" y="374" width="1" height="1"/><rect x="319" y="368" width="1" height="1"/><rect x="319" y="376" width="1" height="1"/><rect x="321" y="368" width="1" height="1"/><rect x="321" y="375" width="1" height="1"/><rect x="322" y="375" width="1" height="1"/><rect x="325" y="369" width="1" height="1"/><rect x="326" y="375" width="1" height="1"/><rect x="328" y="368" width="1" height="1"/><rect x="328" y="376" width="1" height="1"/><rect x="333" y="375" width="1" height="1"/><rect x="334" y="375" width="1" height="1"/><rect x="336" y="375" width="1" height="1"/><rect x="337" y="368" width="1" height="1"/><rect x="339" y="367" width="1" height="1"/><rect x="341" y="375" width="1" height="1"/><rect x="344" y="375" width="1" height="1"/><rect x="349" y="368" width="1" height="1"/><rect x="350" y="368" width="1" height="1"/><rect x="350" y="375" width="1" height="1"/><rect x="351" y="368" width="1" height="1"/><rect x="352" y="368" width="1" height="1"/><rect x="352" y="375" width="1" height="1"/><rect x="355" y="375" width="1" height="1"/><rect x="358" y="375" width="1" height="1"/><rect x="366" y="368" width="1" height="1"/><rect x="373" y="368" width="1" height="1"/><rect x="374" y="368" width="1" height="1"/><rect x="377" y="375" width="1" height="1"/><rect x="379" y="375" width="1" height="1"/><rect x="383" y="368" width="1" height="1"/><rect x="386" y="367" width="1" height="1"/><rect x="388" y="375" width="1" height="1"/><rect x="391" y="376" width="1" height="1"/><rect x="396" y="368" width="1" height="1"/><rect x="397" y="375" width="1" height="1"/><rect x="407" y="369" width="1" height="1"/><rect x="410" y="375" width="1" height="1"/><rect x="413" y="375" width="1" height="1"/><rect x="421" y="368" width="1" height="1"/><rect x="423" y="375" width="1" height="1"/><rect x="72" y="362" width="1" height="1"/><rect x="76" y="365" width="1" height="1"/><rect x="206.5" y="364" width="1" height="1"/><rect x="269" y="370" width="1" height="1"/><rect x="49" y="372" width="1" height="1"/><rect x="50" y="373" width="1" height="1"/></g></svg><div class="t" style="left:47.8px;top:104.7px;font-size:11px;letter-spacing:-0.3px;-webkit-text-stroke:0;">MB/s</div><div class="t" style="left:412.54px;top:104.7px;font-size:11px;letter-spacing:-0.3px;-webkit-text-stroke:0;">ms</div><div class="t" style="left:25.75px;top:111.7px;font-size:11px;letter-spacing:-0.3px;-webkit-text-stroke:0;">500</div><div class="t" style="left:431.2px;top:111.7px;font-size:11px;letter-spacing:-0.3px;-webkit-text-stroke:0;">0.50</div><div class="t" style="left:25.75px;top:141.7px;font-size:11px;letter-spacing:-0.3px;-webkit-text-stroke:0;">450</div><div class="t" style="left:431.2px;top:141.7px;font-size:11px;letter-spacing:-0.3px;-webkit-text-stroke:0;">0.45</div><div class="t" style="left:25.75px;top:172.7px;font-size:11px;letter-spacing:-0.3px;-webkit-text-stroke:0;">400</div><div class="t" style="left:431.2px;top:172.7px;font-size:11px;letter-spacing:-0.3px;-webkit-text-stroke:0;">0.40</div><div class="t" style="left:25.75px;top:203.7px;font-size:11px;letter-spacing:-0.3px;-webkit-text-stroke:0;">350</div><div class="t" style="left:431.2px;top:203.7px;font-size:11px;letter-spacing:-0.3px;-webkit-text-stroke:0;">0.35</div><div class="t" style="left:25.75px;top:234.7px;font-size:11px;letter-spacing:-0.3px;-webkit-text-stroke:0;">300</div><div class="t" style="left:431.2px;top:234.7px;font-size:11px;letter-spacing:-0.3px;-webkit-text-stroke:0;">0.30</div><div class="t" style="left:25.75px;top:265.7px;font-size:11px;letter-spacing:-0.3px;-webkit-text-stroke:0;">250</div><div class="t" style="left:431.2px;top:265.7px;font-size:11px;letter-spacing:-0.3px;-webkit-text-stroke:0;">0.25</div><div class="t" style="left:25.75px;top:296.7px;font-size:11px;letter-spacing:-0.3px;-webkit-text-stroke:0;">200</div><div class="t" style="left:431.2px;top:296.7px;font-size:11px;letter-spacing:-0.3px;-webkit-text-stroke:0;">0.20</div><div class="t" style="left:25.75px;top:327.7px;font-size:11px;letter-spacing:-0.3px;-webkit-text-stroke:0;">150</div><div class="t" style="left:431.2px;top:327.7px;font-size:11px;letter-spacing:-0.3px;-webkit-text-stroke:0;">0.15</div><div class="t" style="left:25.75px;top:358.7px;font-size:11px;letter-spacing:-0.3px;-webkit-text-stroke:0;">100</div><div class="t" style="left:431.2px;top:358.7px;font-size:11px;letter-spacing:-0.3px;-webkit-text-stroke:0;">0.10</div><div class="t" style="left:31.57px;top:389.7px;font-size:11px;letter-spacing:-0.3px;-webkit-text-stroke:0;">50</div><div class="t" style="left:431.2px;top:389.7px;font-size:11px;letter-spacing:-0.3px;-webkit-text-stroke:0;">0.05</div><div class="t" style="left:45.59px;top:431.5px;font-size:11px;letter-spacing:-0.3px;-webkit-text-stroke:0;">0</div><div class="t" style="left:79.68px;top:431.5px;font-size:11px;letter-spacing:-0.3px;-webkit-text-stroke:0;">25</div><div class="t" style="left:117.68px;top:431.5px;font-size:11px;letter-spacing:-0.3px;-webkit-text-stroke:0;">51</div><div class="t" style="left:155.68px;top:431.5px;font-size:11px;letter-spacing:-0.3px;-webkit-text-stroke:0;">76</div><div class="t" style="left:190.77px;top:431.5px;font-size:11px;letter-spacing:-0.3px;-webkit-text-stroke:0;">102</div><div class="t" style="left:228.77px;top:431.5px;font-size:11px;letter-spacing:-0.3px;-webkit-text-stroke:0;">128</div><div class="t" style="left:265.77px;top:431.5px;font-size:11px;letter-spacing:-0.3px;-webkit-text-stroke:0;">153</div><div class="t" style="left:303.77px;top:431.5px;font-size:11px;letter-spacing:-0.3px;-webkit-text-stroke:0;">179</div><div class="t" style="left:341.77px;top:431.5px;font-size:11px;letter-spacing:-0.3px;-webkit-text-stroke:0;">204</div><div class="t" style="left:379.77px;top:431.5px;font-size:11px;letter-spacing:-0.3px;-webkit-text-stroke:0;">230</div><div class="t" style="left:410.75px;top:431.5px;font-size:11px;letter-spacing:-0.3px;-webkit-text-stroke:0;">256gB</div><div class="btn def" style="left:471px;top:99px;width:73px;height:21px"></div><div class="t" style="left:496px;top:104px;font-size:12px;letter-spacing:0;transform:scaleX(0.8366);transform-origin:0 0;">Start</div><div class="sep" style="top:130px"></div><div class="sep" style="top:169px"></div><div class="sep" style="top:241px"></div><div class="sep" style="top:345px"></div><div class="rad" style="left:467px;top:137px"></div><div class="abs" style="left:470px;top:140px;width:6px;height:6px;border-radius:50%;background:radial-gradient(circle at 35% 35%,#7fd0f4,#1a5a9a 70%,#0e3a6a)"></div><div class="rad" style="left:467px;top:153px"></div><div class="t" style="left:483.4px;top:137px;font-size:12px;letter-spacing:0;transform:scaleX(0.8367);transform-origin:0 0;">Read</div><div class="t" style="left:483.4px;top:153px;font-size:12px;letter-spacing:0;transform:scaleX(0.8424);transform-origin:0 0;">Write</div><div class="chk" style="left:467px;top:177px"></div><div class="t" style="left:483.4px;top:178px;font-size:12px;letter-spacing:0;transform:scaleX(0.8502);transform-origin:0 0;">Short stroke</div><div class="abs" style="left:467px;top:197px;width:62px;height:20px;border:1px solid #abadb3;background:#fff"></div><div class="t" style="left:470.4px;top:201px;font-size:12px;letter-spacing:0;transform:scaleX(0.8542);transform-origin:0 0;color:#7c8088;-webkit-text-stroke:0.2px #7c8088">40</div><div class="abs" style="left:513px;top:199px;width:14px;height:8px;background:#e2e2e2;border-bottom:1px solid #c8c8c8"></div><div class="abs" style="left:513px;top:208px;width:14px;height:7px;background:#e2e2e2"></div><div class="abs" style="left:517.5px;top:201px;width:0;height:0;border-left:2.5px solid transparent;border-right:2.5px solid transparent;border-bottom:3px solid #9a9a9a"></div><div class="abs" style="left:517.5px;top:210px;width:0;height:0;border-left:2.5px solid transparent;border-right:2.5px solid transparent;border-top:3px solid #9a9a9a"></div><div class="t" style="left:539.5px;top:201px;font-size:12px;letter-spacing:0;transform:scaleX(0.8721);transform-origin:0 0;">gB</div><div class="chk" style="left:467px;top:226px"></div><svg style="left:467px;top:226px" width="13" height="13" viewBox="0 0 13 13"><path d="M3 6.4 L5.4 9.6 L10 2.6" fill="none" stroke="#3444a0" stroke-width="1.7"/></svg><div class="t" style="left:483.4px;top:226px;font-size:12px;letter-spacing:0;transform:scaleX(0.8500);transform-origin:0 0;">Transfer rate</div><div class="t" style="left:468px;top:245px;font-size:12px;letter-spacing:0;transform:scaleX(0.8158);transform-origin:0 0;">Minimum</div><div class="blk" style="top:259px"></div><div class="t" style="left:480.5px;top:259.5px;font-size:12.4px;letter-spacing:0;transform:scaleX(1.0297);transform-origin:0 0;font-weight:bold;color:#1e9cf0;-webkit-text-stroke:0.3px #1e9cf0;">462.5 MB/s</div><div class="t" style="left:468px;top:278px;font-size:12px;letter-spacing:0;transform:scaleX(0.8173);transform-origin:0 0;">Maximum</div><div class="blk" style="top:292px"></div><div class="t" style="left:480.5px;top:292.5px;font-size:12.4px;letter-spacing:0;transform:scaleX(1.0297);transform-origin:0 0;font-weight:bold;color:#1e9cf0;-webkit-text-stroke:0.3px #1e9cf0;">477.6 MB/s</div><div class="t" style="left:468px;top:308px;font-size:12px;letter-spacing:0;transform:scaleX(0.8207);transform-origin:0 0;">Average</div><div class="blk" style="top:323px"></div><div class="t" style="left:480.5px;top:323.5px;font-size:12.4px;letter-spacing:0;transform:scaleX(1.0297);transform-origin:0 0;font-weight:bold;color:#1e9cf0;-webkit-text-stroke:0.3px #1e9cf0;">474.5 MB/s</div><div class="chk" style="left:467px;top:351px"></div><svg style="left:467px;top:351px" width="13" height="13" viewBox="0 0 13 13"><path d="M3 6.4 L5.4 9.6 L10 2.6" fill="none" stroke="#3444a0" stroke-width="1.7"/></svg><div class="t" style="left:483.4px;top:352px;font-size:12px;letter-spacing:0;transform:scaleX(0.8503);transform-origin:0 0;">Access time</div><div class="blk" style="top:367px"></div><div class="t" style="left:488.35px;top:367.5px;font-size:12.4px;letter-spacing:0;transform:scaleX(0.9600);transform-origin:0 0;font-weight:bold;color:#f0f020;-webkit-text-stroke:0.3px #f0f020;">0.050 ms</div><div class="chk" style="left:467px;top:385px"></div><svg style="left:467px;top:385px" width="13" height="13" viewBox="0 0 13 13"><path d="M3 6.4 L5.4 9.6 L10 2.6" fill="none" stroke="#3444a0" stroke-width="1.7"/></svg><div class="t" style="left:483.4px;top:386px;font-size:12px;letter-spacing:0;transform:scaleX(0.8267);transform-origin:0 0;">Burst rate</div><div class="blk" style="top:400px"></div><div class="t" style="left:481.0px;top:400.5px;font-size:12.4px;letter-spacing:0;transform:scaleX(1.0141);transform-origin:0 0;font-weight:bold;color:#fff;-webkit-text-stroke:0.3px #fff;">315.0 MB/s</div><div class="t" style="left:467.5px;top:419px;font-size:12px;letter-spacing:0;transform:scaleX(0.8588);transform-origin:0 0;">CPU usage</div><div class="blk" style="top:434px"></div><div class="t" style="left:501.0px;top:434.5px;font-size:12.4px;letter-spacing:0;transform:scaleX(0.8846);transform-origin:0 0;font-weight:bold;color:#fff;-webkit-text-stroke:0.3px #fff;">1.6%</div></div>
</div>
<div class="win" style="left:593px;width:577px">
<div class="tb"></div><div class="tbl"></div><div class="combo" style="left:11px;top:6px;width:223px;height:21px"></div><div class="t" style="left:15.5px;top:10px;font-size:12px;letter-spacing:0;transform:scaleX(0.8808);transform-origin:0 0;">Samsung SSD 850 PRO 256G (256 gB)</div><div class="arr" style="left:223px;top:15px"></div><div class="btn" style="left:246px;top:4px;width:27px;height:26px"></div><svg style="left:254.6px;top:8px" width="10" height="17" viewBox="0 0 10 17"><defs><linearGradient id="rg" x1="0" y1="0" x2="1" y2="0"><stop offset="0" stop-color="#e83030"/><stop offset=".45" stop-color="#dc1616"/><stop offset="1" stop-color="#7c0606"/></linearGradient></defs><ellipse cx="4.9" cy="13.2" rx="4.1" ry="3.5" fill="url(#rg)" stroke="#5e0505" stroke-width=".7"/><path d="M2.9 1.4 Q2.9 0.3 4 0.3 H6.8 Q7.9 0.3 7.9 1.4 V11 H2.9Z" fill="url(#rg)" stroke="#5e0505" stroke-width=".7"/><path d="M2.9 1.4 Q2.9 0.3 4 0.3 H6.8 Q7.9 0.3 7.9 1.4 V3.8 H2.9Z" fill="#46c4d6" stroke="#1a6a78" stroke-width=".7"/><path d="M3.3 9.4 H7.5 V11.4 H3.3Z" fill="url(#rg)"/><path d="M3.4 12 L4.6 12.2 L4.4 13.4 L3.2 13.2Z" fill="#fff"/></svg><div class="t" style="left:276px;top:11.4px;font-weight:bold;letter-spacing:0;font-size:12px;transform:scaleX(1.4);transform-origin:0 0">–</div><div class="t" style="left:288.6px;top:11.2px;font-weight:bold;letter-spacing:0.2px;font-size:12.5px">°C</div><div class="btn" style="left:348px;top:4px;width:27px;height:26px"></div><div class="btn" style="left:378px;top:4px;width:27px;height:26px"></div><div class="btn" style="left:408px;top:4px;width:27px;height:26px"></div><div class="btn" style="left:438px;top:4px;width:27px;height:26px"></div><svg style="left:354px;top:9px" width="16" height="16" viewBox="0 0 16 16"><path d="M1.6 13.4 H9.6 V15.6 H15.6 V5" stroke="#333" stroke-width="1" fill="none" opacity=".55"/><path d="M0.6 0.6 H6.199999999999999 L9.0 3.4 V12.6 H0.6Z" fill="#fff" stroke="#000" stroke-width="1.1"/><path d="M6.199999999999999 0.6 V3.4 H9.0" fill="#e8e8e8" stroke="#000" stroke-width=".9"/><rect x="2.0" y="4.2" width="5.4" height="1" fill="#2a8ee8"/><rect x="2.0" y="6.2" width="5.4" height="1" fill="#2a8ee8"/><rect x="2.0" y="8.2" width="5.4" height="1" fill="#2a8ee8"/><rect x="2.0" y="10.2" width="5.4" height="1" fill="#2a8ee8"/><path d="M6.4 2.6 H12.0 L14.8 5.4 V14.6 H6.4Z" fill="#fff" stroke="#000" stroke-width="1.1"/><path d="M12.0 2.6 V5.4 H14.8" fill="#e8e8e8" stroke="#000" stroke-width=".9"/><rect x="7.800000000000001" y="6.2" width="5.4" height="1" fill="#2a8ee8"/><rect x="7.800000000000001" y="8.2" width="5.4" height="1" fill="#2a8ee8"/><rect x="7.800000000000001" y="10.2" width="5.4" height="1" fill="#2a8ee8"/><rect x="7.800000000000001" y="12.2" width="5.4" height="1" fill="#2a8ee8"/></svg><svg style="left:384px;top:9px" width="16" height="16" viewBox="0 0 16 16"><path d="M1.6 13.4 H9.6 V15.6 H15.6 V5" stroke="#333" stroke-width="1" fill="none" opacity=".55"/><path d="M0.6 0.6 H6.199999999999999 L9.0 3.4 V12.6 H0.6Z" fill="#fff" stroke="#000" stroke-width="1.1"/><path d="M6.199999999999999 0.6 V3.4 H9.0" fill="#e8e8e8" stroke="#000" stroke-width=".9"/><rect x="1.6" y="2.0" width="4.4" height="2.2" fill="#a8e0ff"/><rect x="1.6" y="4.2" width="6.4" height="6" fill="#22b022"/><rect x="3.6" y="6.0" width="1.8" height="1.8" fill="#c8e820"/><rect x="5.199999999999999" y="8.0" width="1.4" height="1.4" fill="#084008"/><path d="M6.4 2.6 H12.0 L14.8 5.4 V14.6 H6.4Z" fill="#fff" stroke="#000" stroke-width="1.1"/><path d="M12.0 2.6 V5.4 H14.8" fill="#e8e8e8" stroke="#000" stroke-width=".9"/><rect x="7.4" y="4.0" width="4.4" height="2.2" fill="#a8e0ff"/><rect x="7.4" y="6.2" width="6.4" height="6" fill="#22b022"/><rect x="9.4" y="8.0" width="1.8" height="1.8" fill="#c8e820"/><rect x="11.0" y="10.0" width="1.4" height="1.4" fill="#084008"/></svg><svg style="left:414px;top:8.6px" width="16" height="16" viewBox="0 0 16 16"><defs><linearGradient id="bg1" x1="0" y1="0" x2="1" y2="0"><stop offset="0" stop-color="#5a68d8"/><stop offset=".3" stop-color="#2030c8"/><stop offset="1" stop-color="#0c1890"/></linearGradient></defs><path d="M0.6 0.6 H14.4 V14.8 H2.2 L0.6 13.2Z" fill="url(#bg1)" stroke="#060a3c" stroke-width="1.2"/><path d="M15.2 1.6 V15.6 H3" stroke="#222" stroke-width="1" fill="none" opacity=".6"/><rect x="4" y="1.2" width="8" height="6.6" fill="#d8d8d8"/><path d="M4.4 2.6 H11.6 M4.4 4.4 H11.6 M4.4 6.2 H11.6" stroke="#8a8a8a" stroke-width=".9"/><rect x="4" y="10.4" width="8.4" height="4" fill="#c8c8c8"/><rect x="7.6" y="10.8" width="2.2" height="3.2" fill="#1a2aa8"/></svg><svg style="left:442.6px;top:7.6px" width="18" height="18" viewBox="0 0 18 18"><path d="M10.09 6.62 L9.85 7.79 L8.55 7.82 L8.05 8.55 L8.52 9.77 L7.52 10.43 L6.58 9.53 L5.71 9.70 L5.18 10.89 L4.01 10.65 L3.98 9.35 L3.25 8.85 L2.03 9.32 L1.37 8.32 L2.27 7.38 L2.10 6.51 L0.91 5.98 L1.15 4.81 L2.45 4.78 L2.95 4.05 L2.48 2.83 L3.48 2.17 L4.42 3.07 L5.29 2.90 L5.82 1.71 L6.99 1.95 L7.02 3.25 L7.75 3.75 L8.97 3.28 L9.63 4.28 L8.73 5.22 L8.90 6.09Z" transform="translate(.9 .9)" fill="#2a2a04" stroke="#2a2a04" stroke-width="1.2" stroke-linejoin="round" opacity=".75"/><path d="M10.09 6.62 L9.85 7.79 L8.55 7.82 L8.05 8.55 L8.52 9.77 L7.52 10.43 L6.58 9.53 L5.71 9.70 L5.18 10.89 L4.01 10.65 L3.98 9.35 L3.25 8.85 L2.03 9.32 L1.37 8.32 L2.27 7.38 L2.10 6.51 L0.91 5.98 L1.15 4.81 L2.45 4.78 L2.95 4.05 L2.48 2.83 L3.48 2.17 L4.42 3.07 L5.29 2.90 L5.82 1.71 L6.99 1.95 L7.02 3.25 L7.75 3.75 L8.97 3.28 L9.63 4.28 L8.73 5.22 L8.90 6.09Z" fill="#e4e41e" stroke="#3a3a04" stroke-width="1.1" stroke-linejoin="round"/><circle cx="5.5" cy="6.3" r="1.66" fill="#8a8a10"/><rect x="4.6" y="1.3999999999999995" width="1.9" height="6.2" fill="#d8d8d8" stroke="#333" stroke-width=".8"/><path d="M15.99 12.13 L15.75 13.32 L14.41 13.35 L13.91 14.10 L14.38 15.35 L13.37 16.02 L12.40 15.10 L11.52 15.27 L10.97 16.49 L9.78 16.25 L9.75 14.91 L9.00 14.41 L7.75 14.88 L7.08 13.87 L8.00 12.90 L7.83 12.02 L6.61 11.47 L6.85 10.28 L8.19 10.25 L8.69 9.50 L8.22 8.25 L9.23 7.58 L10.20 8.50 L11.08 8.33 L11.63 7.11 L12.82 7.35 L12.85 8.69 L13.60 9.19 L14.85 8.72 L15.52 9.73 L14.60 10.70 L14.77 11.58Z" transform="translate(.9 .9)" fill="#2a2a04" stroke="#2a2a04" stroke-width="1.2" stroke-linejoin="round" opacity=".75"/><path d="M15.99 12.13 L15.75 13.32 L14.41 13.35 L13.91 14.10 L14.38 15.35 L13.37 16.02 L12.40 15.10 L11.52 15.27 L10.97 16.49 L9.78 16.25 L9.75 14.91 L9.00 14.41 L7.75 14.88 L7.08 13.87 L8.00 12.90 L7.83 12.02 L6.61 11.47 L6.85 10.28 L8.19 10.25 L8.69 9.50 L8.22 8.25 L9.23 7.58 L10.20 8.50 L11.08 8.33 L11.63 7.11 L12.82 7.35 L12.85 8.69 L13.60 9.19 L14.85 8.72 L15.52 9.73 L14.60 10.70 L14.77 11.58Z" fill="#e4e41e" stroke="#3a3a04" stroke-width="1.1" stroke-linejoin="round"/><circle cx="11.3" cy="11.8" r="1.69" fill="#8a8a10"/><rect x="10.4" y="6.9" width="1.9" height="6.2" fill="#d8d8d8" stroke="#333" stroke-width=".8"/></svg><div class="btn" style="left:472px;top:4px;width:27px;height:26px"></div><svg style="left:476px;top:7.4px" width="19" height="19" viewBox="0 0 19 19"><defs><linearGradient id="pg" x1="0" y1="0" x2="1" y2="1"><stop offset="0" stop-color="#d860d8"/><stop offset=".25" stop-color="#b818b8"/><stop offset=".6" stop-color="#a80ca8"/><stop offset="1" stop-color="#820682"/></linearGradient></defs><rect x="0" y="0" width="19" height="19" rx="1.8" fill="url(#pg)"/><rect x="0.5" y="0.5" width="18" height="18" rx="1.6" fill="none" stroke="#7a0a7a" stroke-width="1" opacity=".8"/><path d="M9.5 2 V12.5" stroke="#fff" stroke-width="2.4"/><path d="M2.9 10.6 L6.2 11.3 H12.8 L16.1 10.6 L9.5 17.6Z" fill="#fff"/></svg><div class="btn" style="left:514px;top:4px;width:52px;height:26px"></div><div class="t" style="left:532px;top:11px;font-size:12px;letter-spacing:0;transform:scaleX(0.7498);transform-origin:0 0;">Exit</div><div class="tab" style="left:13px;top:46px;width:106px;height:21px"></div><svg style="z-index:4;left:26.4px;top:48px" width="16" height="16" viewBox="0 0 16 16"><path d="M4.7 1.4 Q8 -0.6 11.3 1.4 Q12 4.4 10.2 9.6 Q9.7 11 8 11 Q6.3 11 5.8 9.6 Q4 4.4 4.7 1.4Z" fill="#dada1c" stroke="#4a4a08" stroke-width="1.3"/><ellipse cx="8" cy="14" rx="2.5" ry="1.8" fill="#dada1c" stroke="#4a4a08" stroke-width="1.3"/><path d="M6.4 2.2 Q6 5 6.9 8.6" stroke="#ffffa0" stroke-width="1.1" fill="none"/></svg><div class="t" style="left:50.6px;top:51px;font-size:12px;letter-spacing:0;transform:scaleX(0.8700);transform-origin:0 0;z-index:4;">Benchmark</div><div class="tab" style="left:120px;top:46px;width:69px;height:21px"></div><svg style="z-index:4;left:131.8px;top:48px" width="16" height="16" viewBox="0 0 16 16"><ellipse cx="8.6" cy="2.6" rx="2.8" ry="2.2" fill="#38b0f0" stroke="#0a3c8c" stroke-width=".9"/><path d="M5 6 H10.6 V13 H12.4 V15.4 H4 V13 H6.2 V8 H5Z" fill="#1464e6" stroke="#06207a" stroke-width=".9"/><path d="M7 7 V14" stroke="#5aa0ff" stroke-width="1"/></svg><div class="t" style="left:156px;top:51px;font-size:12px;letter-spacing:0;transform:scaleX(0.8144);transform-origin:0 0;z-index:4;">Info</div><div class="tab" style="left:190px;top:46px;width:82px;height:21px"></div><svg style="z-index:4;left:203px;top:48px" width="16" height="16" viewBox="0 0 16 16"><path d="M5.5 0.6 H10.5 V5.5 H15.4 V10.5 H10.5 V15.4 H5.5 V10.5 H0.6 V5.5 H5.5Z" fill="#e22424" stroke="#6e0808" stroke-width="1.3" stroke-linejoin="round"/><path d="M6.5 1.8 V6.5 H1.8" stroke="#ff8a8a" stroke-width="1" fill="none"/><path d="M9.6 2 V6.4 H14.4 V9.6 H9.6 V14.4" stroke="#a81010" stroke-width="1" fill="none"/></svg><div class="t" style="left:226.7px;top:51px;font-size:12px;letter-spacing:0;transform:scaleX(0.8361);transform-origin:0 0;z-index:4;">Health</div><div class="tab" style="left:273px;top:46px;width:101px;height:21px"></div><svg style="z-index:4;left:285.6px;top:48px" width="17" height="16" viewBox="0 0 17 16"><path d="M9 9 L15 14.6" stroke="#0c0c6e" stroke-width="4" stroke-linecap="round"/><path d="M9.4 8.8 L14.8 13.8" stroke="#2828d8" stroke-width="1.6" stroke-linecap="round"/><circle cx="5.6" cy="5.4" r="4.8" fill="#3cd83c" stroke="#0a5a0a" stroke-width="1.1"/><path d="M3 7.4 L7.6 3" stroke="#b8ffb8" stroke-width="1.1"/><path d="M4.6 8.2 L8.4 4.6" stroke="#8cf08c" stroke-width=".9"/></svg><div class="t" style="left:310px;top:51px;font-size:12px;letter-spacing:0;transform:scaleX(0.8492);transform-origin:0 0;z-index:4;">Error Scan</div><div class="tab" style="left:375px;top:46px;width:113px;height:21px"></div><svg style="z-index:4;left:388px;top:48px" width="16" height="16" viewBox="0 0 16 16"><defs><linearGradient id="fg" x1="0" y1="0" x2="1" y2="1"><stop offset="0" stop-color="#fbe66a"/><stop offset="1" stop-color="#c99a0c"/></linearGradient></defs><path d="M1.2 3 Q1.2 0.8 3.2 0.8 H6.4 Q7.8 0.8 8.4 2.4 H12.6 Q14.2 2.4 14.2 4 V5" fill="#f6e27a" stroke="#2a1e02" stroke-width="1.3"/><path d="M1.2 3.4 V13.6 Q1.2 15.2 2.8 15.2 H13.4 Q15 15.2 15 13.6 V5.6 Q15 4.4 13.6 4.4 H4 Q2.8 4.4 2.8 5.6 V13" fill="url(#fg)" stroke="#2a1e02" stroke-width="1.3"/></svg><div class="t" style="left:412px;top:51px;font-size:12px;letter-spacing:0;transform:scaleX(0.8538);transform-origin:0 0;z-index:4;">Folder Usage</div><div class="tab" style="left:489px;top:46px;width:75px;height:21px"></div><svg style="z-index:4;left:502.4px;top:48px" width="14" height="16" viewBox="0 0 14 16"><defs><linearGradient id="tg" x1="0" y1="0" x2="1" y2="0"><stop offset="0" stop-color="#3a3a3a"/><stop offset=".35" stop-color="#e8e8e8"/><stop offset=".6" stop-color="#8a8a8a"/><stop offset="1" stop-color="#1e1e1e"/></linearGradient></defs><path d="M4.4 1.8 V0.7 H9.6 V1.8" fill="#222" stroke="#000" stroke-width="1.3"/><path d="M0.6 1.8 H13.4 V4 H0.6Z" fill="#1a1a1a" stroke="#000" stroke-width="1.1"/><path d="M1.8 4.2 H12.2 L11.6 15.3 H2.4Z" fill="url(#tg)" stroke="#000" stroke-width="1.3"/><path d="M4.3 5 L4.6 14.6 M7 5 V14.6 M9.7 5 L9.4 14.6" stroke="#1a1a1a" stroke-width="1"/></svg><div class="t" style="left:525.7px;top:51px;font-size:12px;letter-spacing:0;transform:scaleX(0.8199);transform-origin:0 0;z-index:4;">Erase</div><div class="tab" style="left:142px;top:67px;width:112px;height:20px"></div><svg style="z-index:4;left:156.2px;top:68.2px" width="16" height="16" viewBox="0 0 16 16"><rect x="0.6" y="0.6" width="14.8" height="14.8" fill="#ffffc0" stroke="#000" stroke-width="1.2"/><path d="M15.7 1.6 V15.7 H1.6" stroke="#000" stroke-width="1" fill="none" opacity=".8"/><rect x="1.2" y="7.2" width="2.0" height="7.6" fill="#22e022"/><rect x="3.2" y="10.4" width="1.8" height="4.4" fill="#2458d0"/><rect x="5.0" y="11.4" width="2.0" height="3.4" fill="#22e022"/><rect x="7.0" y="6.2" width="0.9" height="8.6" fill="#1f7a6a"/><rect x="7.9" y="7.2" width="2.7" height="7.6" fill="#22e022"/><rect x="10.6" y="9.4" width="2.0" height="5.4" fill="#2458d0"/><rect x="12.6" y="10.4" width="2.2" height="4.4" fill="#22e022"/></svg><div class="t" style="left:180px;top:71px;font-size:12px;letter-spacing:0;transform:scaleX(0.8549);transform-origin:0 0;z-index:4;">Disk monitor</div><div class="tab" style="left:255px;top:67px;width:76px;height:20px"></div><svg style="z-index:4;left:268.8px;top:68.2px" width="17" height="16" viewBox="0 0 17 16"><path d="M0.8 5.6 H3.6 L9.4 0.6 H10.6 V15 H9.4 L3.6 10.2 H0.8Z" fill="#f2ee2a" stroke="#2e2a04" stroke-width="1.4" stroke-linejoin="round"/><path d="M9 2 V13.6" stroke="#a8a010" stroke-width="1.4"/><circle cx="8" cy="6.4" r=".8" fill="#333"/><circle cx="8" cy="9.2" r=".8" fill="#333"/><path d="M12.4 4.8 Q14.2 7.8 12.4 10.8" stroke="#222" stroke-width="1.5" fill="none"/><path d="M14.4 3 Q17.4 7.8 14.4 12.6" stroke="#444" stroke-width="1.4" fill="none"/></svg><div class="t" style="left:292.6px;top:71px;font-size:12px;letter-spacing:0;transform:scaleX(0.8345);transform-origin:0 0;z-index:4;">AAM</div><div class="tab" style="left:332px;top:67px;width:131px;height:20px"></div><svg style="z-index:4;left:345.8px;top:68.2px" width="16" height="16" viewBox="0 0 16 16"><rect x="0.6" y="0.6" width="14.8" height="14.8" fill="#fffad2" stroke="#000" stroke-width="1.2"/><path d="M15.6 1.5 V15.6 H1.5" stroke="#000" stroke-width="1.2" fill="none"/><rect x="2.6" y="12.6" width="1" height="1" fill="#e02020"/><rect x="3.6" y="9" width="1" height="1" fill="#2020c0"/><rect x="4.6" y="11" width="1" height="1" fill="#e06010"/><rect x="5.6" y="7.6" width="1" height="1" fill="#2020c0"/><rect x="6.4" y="10.2" width="1" height="1" fill="#e02020"/><rect x="7.4" y="6" width="1" height="1" fill="#e06010"/><rect x="8" y="11.8" width="1" height="1" fill="#e02020"/><rect x="8.8" y="8.4" width="1" height="1" fill="#2020c0"/><rect x="9.8" y="5" width="1" height="1" fill="#e02020"/><rect x="10.4" y="10" width="1" height="1" fill="#e06010"/><rect x="11.2" y="3.6" width="1" height="1" fill="#2020c0"/><rect x="11.8" y="8" width="1" height="1" fill="#e02020"/><rect x="12.4" y="11.4" width="1" height="1" fill="#e06010"/><rect x="12.8" y="5.8" width="1" height="1" fill="#2020c0"/><rect x="5" y="13" width="1" height="1" fill="#e06010"/><rect x="10" y="12.6" width="1" height="1" fill="#e02020"/><rect x="3" y="6" width="1" height="1" fill="#e06010"/></svg><div class="t" style="left:369.5px;top:71px;font-size:12px;letter-spacing:0;transform:scaleX(0.8858);transform-origin:0 0;z-index:4;">Random Access</div><div class="tab" style="left:464px;top:67px;width:100px;height:20px"></div><svg style="z-index:4;left:478.3px;top:68.2px" width="16" height="16" viewBox="0 0 16 16"><rect x="0.6" y="0.6" width="14.8" height="14.8" fill="#ffffc0" stroke="#000" stroke-width="1.2"/><path d="M15.7 1.6 V15.7 H1.6" stroke="#000" stroke-width="1" fill="none" opacity=".8"/><rect x="1.2" y="7" width="1.9" height="7.8" fill="#22e022"/><rect x="3.1" y="10" width="1.8" height="4.8" fill="#2458d0"/><rect x="4.9" y="12" width="1" height="2.8" fill="#22e022"/><rect x="6" y="6.2" width="8.8" height="8.6" fill="#fff"/><rect x="6" y="6.2" width="8.8" height="1.8" fill="#14147a"/><rect x="6" y="6.2" width="1.1" height="8.6" fill="#14147a"/><rect x="8.3" y="9.2" width="1" height="1" fill="#c02020"/><rect x="10.4" y="9.2" width="1" height="1" fill="#202090"/><rect x="12.5" y="9.2" width="1" height="1" fill="#c02020"/><rect x="8.3" y="11.2" width="1" height="1" fill="#209020"/><rect x="10.4" y="11.2" width="1" height="1" fill="#c02020"/><rect x="12.5" y="11.2" width="1" height="1" fill="#c02020"/><rect x="8.3" y="13.2" width="1" height="1" fill="#c02020"/><rect x="10.4" y="13.2" width="1" height="1" fill="#c02020"/><rect x="12.5" y="13.2" width="1" height="1" fill="#202090"/></svg><div class="t" style="left:501.7px;top:71px;font-size:12px;letter-spacing:0;transform:scaleX(0.8468);transform-origin:0 0;z-index:4;">Extra tests</div><div class="tab sel" style="left:11px;top:64px;width:132px;height:23px"></div><svg style="z-index:4;left:28px;top:66px" width="16" height="16" viewBox="0 0 16 16"><path d="M1.5 0.5 H10.5 L14.5 4.5 V15.5 H1.5Z" fill="#fff" stroke="#000" stroke-width="1.2"/><path d="M10.5 0.5 V4.5 H14.5" fill="#ddd" stroke="#000" stroke-width="1"/><path d="M5.6 3 Q8 0.8 10.4 3 Q11 5.6 9.4 9.2 Q8.9 10.2 8 10.2 Q7.1 10.2 6.6 9.2 Q5 5.6 5.6 3Z" fill="#d420d4" stroke="#4a004a" stroke-width="1"/><ellipse cx="8" cy="12.9" rx="1.8" ry="1.3" fill="#d420d4" stroke="#4a004a" stroke-width="1"/></svg><div class="t" style="left:51.5px;top:69px;font-size:12px;letter-spacing:0;transform:scaleX(0.8602);transform-origin:0 0;z-index:4;">File Benchmark</div><div class="panel" style="left:11px;top:86px;width:555px;height:373px"></div><div class="abs" style="left:12px;top:86px;width:130px;height:1px;background:#fff;z-index:5"></div><div style="position:absolute;left:0;top:0;z-index:6"><svg style="left:0;top:0" width="578" height="460" viewBox="0 0 578 460" shape-rendering="crispEdges"><defs><linearGradient id="rgbg" x1="0" y1="0" x2="0" y2="1"><stop offset="0" stop-color="#000"/><stop offset=".2" stop-color="#0a0a0a"/><stop offset="1" stop-color="#404040"/></linearGradient><linearGradient id="gb" x1="0" y1="0" x2="0" y2="1"><stop offset="0" stop-color="#1a78a4"/><stop offset=".3" stop-color="#0f8abe"/><stop offset=".6" stop-color="#06a8e4"/><stop offset=".85" stop-color="#00bcfa"/><stop offset="1" stop-color="#00c0ff"/></linearGradient><linearGradient id="go" x1="0" y1="0" x2="0" y2="1"><stop offset="0" stop-color="#984c06"/><stop offset=".3" stop-color="#b25c06"/><stop offset=".6" stop-color="#dc7204"/><stop offset=".85" stop-color="#fa8200"/><stop offset="1" stop-color="#ff8400"/></linearGradient></defs><rect x="37" y="111" width="414" height="329" fill="#000"/><rect x="39" y="113" width="410" height="325" fill="url(#rgbg)"/><path d="M52.5 113 V438" stroke="#6c6c6c" stroke-width="1"/><path d="M52.5 440 V444" stroke="#606060" stroke-width="1"/><path d="M79.5 113 V438" stroke="#6c6c6c" stroke-width="1"/><path d="M79.5 440 V444" stroke="#606060" stroke-width="1"/><path d="M106.5 113 V438" stroke="#6c6c6c" stroke-width="1"/><path d="M106.5 440 V444" stroke="#606060" stroke-width="1"/><path d="M134.5 113 V438" stroke="#6c6c6c" stroke-width="1"/><path d="M134.5 440 V444" stroke="#606060" stroke-width="1"/><path d="M161.5 113 V438" stroke="#6c6c6c" stroke-width="1"/><path d="M161.5 440 V444" stroke="#606060" stroke-width="1"/><path d="M188.5 113 V438" stroke="#6c6c6c" stroke-width="1"/><path d="M188.5 440 V444" stroke="#606060" stroke-width="1"/><path d="M216.5 113 V438" stroke="#6c6c6c" stroke-width="1"/><path d="M216.5 440 V444" stroke="#606060" stroke-width="1"/><path d="M243.5 113 V438" stroke="#6c6c6c" stroke-width="1"/><path d="M243.5 440 V444" stroke="#606060" stroke-width="1"/><path d="M270.5 113 V438" stroke="#6c6c6c" stroke-width="1"/><path d="M270.5 440 V444" stroke="#606060" stroke-width="1"/><path d="M298.5 113 V438" stroke="#6c6c6c" stroke-width="1"/><path d="M298.5 440 V444" stroke="#606060" stroke-width="1"/><path d="M325.5 113 V438" stroke="#6c6c6c" stroke-width="1"/><path d="M325.5 440 V444" stroke="#606060" stroke-width="1"/><path d="M352.5 113 V438" stroke="#6c6c6c" stroke-width="1"/><path d="M352.5 440 V444" stroke="#606060" stroke-width="1"/><path d="M380.5 113 V438" stroke="#6c6c6c" stroke-width="1"/><path d="M380.5 440 V444" stroke="#606060" stroke-width="1"/><path d="M407.5 113 V438" stroke="#6c6c6c" stroke-width="1"/><path d="M407.5 440 V444" stroke="#606060" stroke-width="1"/><path d="M434.5 113 V438" stroke="#6c6c6c" stroke-width="1"/><path d="M434.5 440 V444" stroke="#606060" stroke-width="1"/><path d="M39 113.5 H450" stroke="#6c6c6c" stroke-width="1"/><path d="M36 113.5 H37" stroke="#333" stroke-width="1"/><path d="M39 140.5 H450" stroke="#6c6c6c" stroke-width="1"/><path d="M39 167.5 H450" stroke="#6c6c6c" stroke-width="1"/><path d="M36 167.5 H37" stroke="#333" stroke-width="1"/><path d="M39 194.5 H450" stroke="#6c6c6c" stroke-width="1"/><path d="M39 221.5 H450" stroke="#6c6c6c" stroke-width="1"/><path d="M36 221.5 H37" stroke="#333" stroke-width="1"/><path d="M39 248.5 H450" stroke="#6c6c6c" stroke-width="1"/><path d="M39 275.5 H450" stroke="#6c6c6c" stroke-width="1"/><path d="M36 275.5 H37" stroke="#333" stroke-width="1"/><path d="M39 302.5 H450" stroke="#6c6c6c" stroke-width="1"/><path d="M39 329.5 H450" stroke="#6c6c6c" stroke-width="1"/><path d="M36 329.5 H37" stroke="#333" stroke-width="1"/><path d="M39 356.5 H450" stroke="#6c6c6c" stroke-width="1"/><path d="M39 383.5 H450" stroke="#6c6c6c" stroke-width="1"/><path d="M36 383.5 H37" stroke="#333" stroke-width="1"/><path d="M39 410.5 H450" stroke="#6c6c6c" stroke-width="1"/><rect x="43" y="422" width="9" height="16" fill="url(#gb)"/><rect x="43" y="422" width="1" height="16" fill="#35b4ee"/><rect x="43" y="422" width="9" height="1" fill="#35b4ee"/><rect x="52" y="424" width="9" height="14" fill="url(#go)"/><rect x="52" y="424" width="1" height="14" fill="#f3ad5c"/><rect x="52" y="424" width="9" height="1" fill="#f09030"/><rect x="70" y="408" width="9" height="30" fill="url(#gb)"/><rect x="70" y="408" width="1" height="30" fill="#35b4ee"/><rect x="70" y="408" width="9" height="1" fill="#35b4ee"/><rect x="79" y="412" width="9" height="26" fill="url(#go)"/><rect x="79" y="412" width="1" height="26" fill="#f3ad5c"/><rect x="79" y="412" width="9" height="1" fill="#f09030"/><rect x="97" y="385" width="9" height="53" fill="url(#gb)"/><rect x="97" y="385" width="1" height="53" fill="#35b4ee"/><rect x="97" y="385" width="9" height="1" fill="#35b4ee"/><rect x="106" y="390" width="9" height="48" fill="url(#go)"/><rect x="106" y="390" width="1" height="48" fill="#f3ad5c"/><rect x="106" y="390" width="9" height="1" fill="#f09030"/><rect x="125" y="348" width="9" height="90" fill="url(#gb)"/><rect x="125" y="348" width="1" height="90" fill="#35b4ee"/><rect x="125" y="348" width="9" height="1" fill="#35b4ee"/><rect x="134" y="357" width="9" height="81" fill="url(#go)"/><rect x="134" y="357" width="1" height="81" fill="#f3ad5c"/><rect x="134" y="357" width="9" height="1" fill="#f09030"/><rect x="152" y="301" width="9" height="137" fill="url(#gb)"/><rect x="152" y="301" width="1" height="137" fill="#35b4ee"/><rect x="152" y="301" width="9" height="1" fill="#35b4ee"/><rect x="161" y="311" width="9" height="127" fill="url(#go)"/><rect x="161" y="311" width="1" height="127" fill="#f3ad5c"/><rect x="161" y="311" width="9" height="1" fill="#f09030"/><rect x="179" y="257" width="9" height="181" fill="url(#gb)"/><rect x="179" y="257" width="1" height="181" fill="#35b4ee"/><rect x="179" y="257" width="9" height="1" fill="#35b4ee"/><rect x="188" y="265" width="9" height="173" fill="url(#go)"/><rect x="188" y="265" width="1" height="173" fill="#f3ad5c"/><rect x="188" y="265" width="9" height="1" fill="#f09030"/><rect x="207" y="216" width="9" height="222" fill="url(#gb)"/><rect x="207" y="216" width="1" height="222" fill="#35b4ee"/><rect x="207" y="216" width="9" height="1" fill="#35b4ee"/><rect x="216" y="225" width="9" height="213" fill="url(#go)"/><rect x="216" y="225" width="1" height="213" fill="#f3ad5c"/><rect x="216" y="225" width="9" height="1" fill="#f09030"/><rect x="234" y="190" width="9" height="248" fill="url(#gb)"/><rect x="234" y="190" width="1" height="248" fill="#35b4ee"/><rect x="234" y="190" width="9" height="1" fill="#35b4ee"/><rect x="243" y="198" width="9" height="240" fill="url(#go)"/><rect x="243" y="198" width="1" height="240" fill="#f3ad5c"/><rect x="243" y="198" width="9" height="1" fill="#f09030"/><rect x="261" y="176" width="9" height="262" fill="url(#gb)"/><rect x="261" y="176" width="1" height="262" fill="#35b4ee"/><rect x="261" y="176" width="9" height="1" fill="#35b4ee"/><rect x="270" y="183" width="9" height="255" fill="url(#go)"/><rect x="270" y="183" width="1" height="255" fill="#f3ad5c"/><rect x="270" y="183" width="9" height="1" fill="#f09030"/><rect x="289" y="165" width="9" height="273" fill="url(#gb)"/><rect x="289" y="165" width="1" height="273" fill="#35b4ee"/><rect x="289" y="165" width="9" height="1" fill="#35b4ee"/><rect x="298" y="172" width="9" height="266" fill="url(#go)"/><rect x="298" y="172" width="1" height="266" fill="#f3ad5c"/><rect x="298" y="172" width="9" height="1" fill="#f09030"/><rect x="316" y="158" width="9" height="280" fill="url(#gb)"/><rect x="316" y="158" width="1" height="280" fill="#35b4ee"/><rect x="316" y="158" width="9" height="1" fill="#35b4ee"/><rect x="325" y="168" width="9" height="270" fill="url(#go)"/><rect x="325" y="168" width="1" height="270" fill="#f3ad5c"/><rect x="325" y="168" width="9" height="1" fill="#f09030"/><rect x="343" y="154" width="9" height="284" fill="url(#gb)"/><rect x="343" y="154" width="1" height="284" fill="#35b4ee"/><rect x="343" y="154" width="9" height="1" fill="#35b4ee"/><rect x="352" y="171" width="9" height="267" fill="url(#go)"/><rect x="352" y="171" width="1" height="267" fill="#f3ad5c"/><rect x="352" y="171" width="9" height="1" fill="#f09030"/><rect x="371" y="152" width="9" height="286" fill="url(#gb)"/><rect x="371" y="152" width="1" height="286" fill="#35b4ee"/><rect x="371" y="152" width="9" height="1" fill="#35b4ee"/><rect x="380" y="166" width="9" height="272" fill="url(#go)"/><rect x="380" y="166" width="1" height="272" fill="#f3ad5c"/><rect x="380" y="166" width="9" height="1" fill="#f09030"/><rect x="398" y="151" width="9" height="287" fill="url(#gb)"/><rect x="398" y="151" width="1" height="287" fill="#35b4ee"/><rect x="398" y="151" width="9" height="1" fill="#35b4ee"/><rect x="407" y="165" width="9" height="273" fill="url(#go)"/><rect x="407" y="165" width="1" height="273" fill="#f3ad5c"/><rect x="407" y="165" width="9" height="1" fill="#f09030"/><rect x="425" y="151" width="9" height="287" fill="url(#gb)"/><rect x="425" y="151" width="1" height="287" fill="#35b4ee"/><rect x="425" y="151" width="9" height="1" fill="#35b4ee"/><rect x="434" y="164" width="9" height="274" fill="url(#go)"/><rect x="434" y="164" width="1" height="274" fill="#f3ad5c"/><rect x="434" y="164" width="9" height="1" fill="#f09030"/><rect x="365" y="100" width="9" height="9" fill="url(#gb)"/><rect x="413" y="100" width="9" height="9" fill="url(#go)"/></svg><div class="t" style="left:39.1px;top:97.7px;font-size:11px;letter-spacing:-0.3px;-webkit-text-stroke:0;">MB/s</div><div class="t" style="left:377px;top:97.5px;font-size:11px;letter-spacing:-0.3px;-webkit-text-stroke:0;letter-spacing:-0.1px;">read</div><div class="t" style="left:426px;top:97.5px;font-size:11px;letter-spacing:-0.3px;-webkit-text-stroke:0;letter-spacing:0.1px;">write</div><div class="t" style="left:17.15px;top:106.7px;font-size:11px;letter-spacing:-0.3px;-webkit-text-stroke:0;">600</div><div class="t" style="left:17.15px;top:160.7px;font-size:11px;letter-spacing:-0.3px;-webkit-text-stroke:0;">500</div><div class="t" style="left:17.15px;top:214.7px;font-size:11px;letter-spacing:-0.3px;-webkit-text-stroke:0;">400</div><div class="t" style="left:17.15px;top:268.7px;font-size:11px;letter-spacing:-0.3px;-webkit-text-stroke:0;">300</div><div class="t" style="left:17.15px;top:322.7px;font-size:11px;letter-spacing:-0.3px;-webkit-text-stroke:0;">200</div><div class="t" style="left:17.15px;top:376.7px;font-size:11px;letter-spacing:-0.3px;-webkit-text-stroke:0;">100</div><div class="t" style="left:45.3px;top:443.5px;font-size:11px;letter-spacing:-0.3px;-webkit-text-stroke:0;">0.5</div><div class="t" style="left:76.59px;top:443.5px;font-size:11px;letter-spacing:-0.3px;-webkit-text-stroke:0;">1</div><div class="t" style="left:103.59px;top:443.5px;font-size:11px;letter-spacing:-0.3px;-webkit-text-stroke:0;">2</div><div class="t" style="left:131.59px;top:443.5px;font-size:11px;letter-spacing:-0.3px;-webkit-text-stroke:0;">4</div><div class="t" style="left:158.59px;top:443.5px;font-size:11px;letter-spacing:-0.3px;-webkit-text-stroke:0;">8</div><div class="t" style="left:182.68px;top:443.5px;font-size:11px;letter-spacing:-0.3px;-webkit-text-stroke:0;">16</div><div class="t" style="left:210.68px;top:443.5px;font-size:11px;letter-spacing:-0.3px;-webkit-text-stroke:0;">32</div><div class="t" style="left:237.68px;top:443.5px;font-size:11px;letter-spacing:-0.3px;-webkit-text-stroke:0;">64</div><div class="t" style="left:261.77px;top:443.5px;font-size:11px;letter-spacing:-0.3px;-webkit-text-stroke:0;">128</div><div class="t" style="left:289.77px;top:443.5px;font-size:11px;letter-spacing:-0.3px;-webkit-text-stroke:0;">256</div><div class="t" style="left:316.77px;top:443.5px;font-size:11px;letter-spacing:-0.3px;-webkit-text-stroke:0;">512</div><div class="t" style="left:340.87px;top:443.5px;font-size:11px;letter-spacing:-0.3px;-webkit-text-stroke:0;">1024</div><div class="t" style="left:368.87px;top:443.5px;font-size:11px;letter-spacing:-0.3px;-webkit-text-stroke:0;">2048</div><div class="t" style="left:395.87px;top:443.5px;font-size:11px;letter-spacing:-0.3px;-webkit-text-stroke:0;">4096</div><div class="t" style="left:422.87px;top:443.5px;font-size:11px;letter-spacing:-0.3px;-webkit-text-stroke:0;">8192</div><div class="btn foc" style="left:481px;top:100px;width:73px;height:21px"></div><div class="abs" style="left:484px;top:103px;width:67px;height:15px;border:1px dotted #000"></div><div class="t" style="left:507px;top:104.6px;font-size:12px;letter-spacing:0;transform:scaleX(0.8366);transform-origin:0 0;">Start</div><div class="t" style="left:480.5px;top:138.5px;font-size:12px;letter-spacing:0;transform:scaleX(0.8571);transform-origin:0 0;">Drive</div><div class="combo" style="left:480px;top:155px;width:75px;height:21px"></div><div class="t" style="left:484px;top:161px;font-size:12px;letter-spacing:0;transform:scaleX(0.8333);transform-origin:0 0;">C:</div><div class="arr" style="left:542.5px;top:165px"></div><div class="t" style="left:480.5px;top:208px;font-size:12px;letter-spacing:0;transform:scaleX(0.8399);transform-origin:0 0;">File length</div><div class="combo" style="left:480px;top:226px;width:75px;height:21px"></div><div class="t" style="left:484px;top:230.5px;font-size:12px;letter-spacing:0;transform:scaleX(0.8766);transform-origin:0 0;">64 MB</div><div class="arr" style="left:542.5px;top:236px"></div><div class="t" style="left:480.5px;top:281.7px;font-size:12px;letter-spacing:0;transform:scaleX(0.8508);transform-origin:0 0;">Delay</div><div class="abs" style="left:480px;top:299px;width:54px;height:20px;border:1px solid #c2c6ce;border-top-color:#a2a6ae;border-radius:2px;background:#fff"></div><div class="t" style="left:483px;top:302.5px;font-size:12px;letter-spacing:0;transform:scaleX(0.8092);transform-origin:0 0;">0</div><div class="abs" style="left:535px;top:299px;width:15px;height:10px;border:1px solid #b0b0b0;background:linear-gradient(#f8f8f8,#dcdcdc)"></div><div class="abs" style="left:535px;top:310px;width:15px;height:10px;border:1px solid #b0b0b0;background:linear-gradient(#f8f8f8,#dcdcdc)"></div><div class="abs" style="left:539px;top:302px;width:0;height:0;border-left:3.5px solid transparent;border-right:3.5px solid transparent;border-bottom:3.5px solid #6464a4"></div><div class="abs" style="left:539px;top:313px;width:0;height:0;border-left:3.5px solid transparent;border-right:3.5px solid transparent;border-top:3.5px solid #6464a4"></div></div>
</div>
<div class="abs" style="left:578px;top:0;width:1px;height:460px;background:linear-gradient(#78828c 0px,#7c8690 96px,#6a7684 98px,#66727e 460px)"></div><div class="abs" style="left:579px;top:0;width:1px;height:460px;background:linear-gradient(#e2ecf6 0px,#eef4fa 96px,#deecfb 98px,#deecfb 460px)"></div><div class="abs" style="left:580px;top:0;width:4px;height:460px;background:linear-gradient(#b6cde4 0px,#c6d8ea 50px,#d3e1ef 96px,#b7d4f3 98px,#b9d7f6 460px)"></div><div class="abs" style="left:584px;top:0;width:1px;height:460px;background:linear-gradient(#e6f0fa 0px,#f0f6fc 96px,#e4f0fc 98px,#e4f0fc 460px)"></div><div class="abs" style="left:585px;top:0;width:1px;height:460px;background:#14181c"></div><div class="abs" style="left:586px;top:0;width:1px;height:460px;background:linear-gradient(#eef4fa 0px,#f2f6fa 96px,#e0ecf8 98px,#e0ecf8 150px,#8a96a2 160px,#8a949e 460px)"></div><div class="abs" style="left:587px;top:0;width:5px;height:460px;background:linear-gradient(#aac0d6 0px,#c2d2e2 40px,#cfdbe8 56px,#c6d4e2 70px,#d0dcea 96px,#a9c2de 98px,#9db6d2 118px,#b6d2f0 140px,#b9d7f6 151px,#10161c 158px,#0c1218 175px,#222c36 230px,#232d37 330px,#1c242c 460px)"></div><div class="abs" style="left:592px;top:0;width:1px;height:460px;background:linear-gradient(#dfe9f3 0px,#e8eef4 96px,#cfdfee 98px,#cfdfee 150px,#46505a 160px,#3c4650 460px)"></div><div class="abs" style="left:593px;top:0;width:1px;height:460px;background:linear-gradient(#8c8c8c 0px,#8c8c8c 150px,#202428 160px,#181c20 460px)"></div>
</body></html>
